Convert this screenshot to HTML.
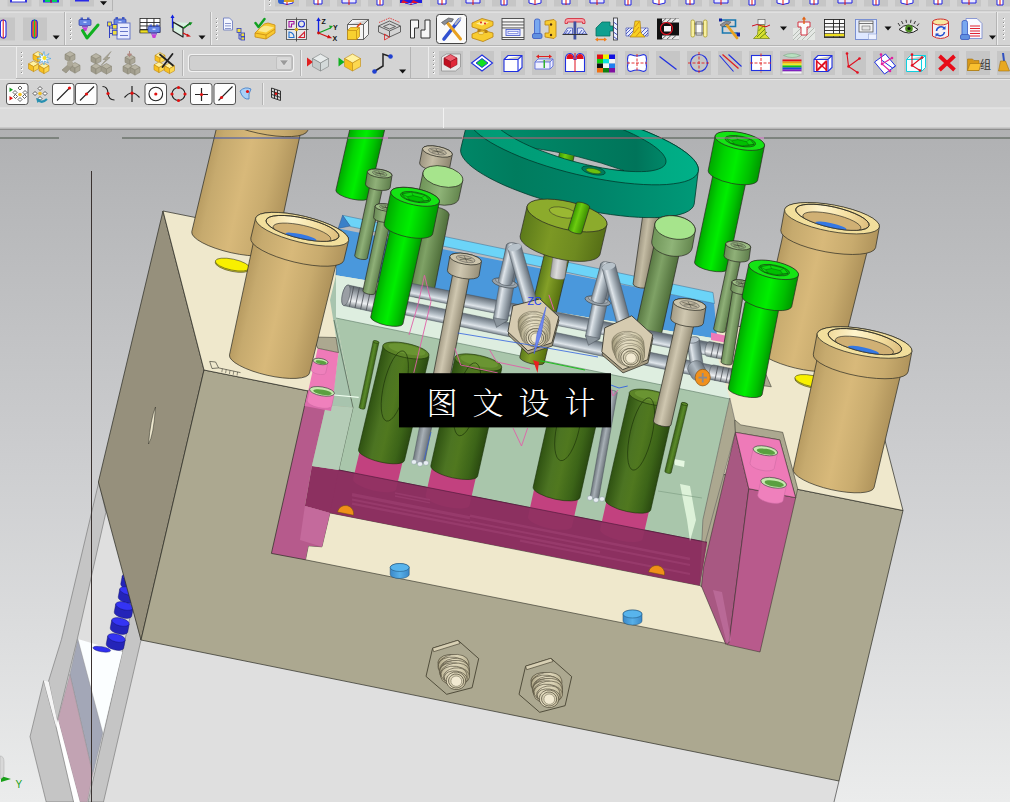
<!DOCTYPE html>
<html><head><meta charset="utf-8"><title>NX</title>
<style>html,body{margin:0;padding:0;background:#d4d4d4;overflow:hidden}svg{display:block}
text{font-family:"Liberation Sans","Noto Sans CJK SC",sans-serif}
.lbl{font-family:"Liberation Serif","Noto Serif CJK SC",serif}
</style></head><body>
<svg width="1010" height="802" viewBox="0 0 1010 802">
<defs>
<linearGradient id="g1" gradientUnits="userSpaceOnUse" x1="0.0" y1="130.0" x2="0.0" y2="802.0"><stop offset="0" stop-color="#b0b1b3"/><stop offset="0.5" stop-color="#cdced0"/><stop offset="1" stop-color="#ebecec"/></linearGradient>
<linearGradient id="g2" gradientUnits="userSpaceOnUse" x1="191.8" y1="231.6" x2="275.8" y2="250.4"><stop offset="0" stop-color="#b89c62"/><stop offset="0.12" stop-color="#c6aa6e"/><stop offset="0.45" stop-color="#d8b97a"/><stop offset="0.75" stop-color="#c8ab6e"/><stop offset="1" stop-color="#b0945c"/></linearGradient>
<linearGradient id="g3" gradientUnits="userSpaceOnUse" x1="213.9" y1="110.4" x2="307.7" y2="130.6"><stop offset="0" stop-color="#b89c62"/><stop offset="0.12" stop-color="#c6aa6e"/><stop offset="0.45" stop-color="#d8b97a"/><stop offset="0.75" stop-color="#c8ab6e"/><stop offset="1" stop-color="#b0945c"/></linearGradient>
<linearGradient id="g4" gradientUnits="userSpaceOnUse" x1="757.7" y1="347.2" x2="838.5" y2="366.4"><stop offset="0" stop-color="#b89c62"/><stop offset="0.12" stop-color="#c6aa6e"/><stop offset="0.45" stop-color="#d8b97a"/><stop offset="0.75" stop-color="#c8ab6e"/><stop offset="1" stop-color="#b0945c"/></linearGradient>
<linearGradient id="g5" gradientUnits="userSpaceOnUse" x1="780.8" y1="230.3" x2="875.6" y2="247.7"><stop offset="0" stop-color="#b89c62"/><stop offset="0.12" stop-color="#c6aa6e"/><stop offset="0.45" stop-color="#d8b97a"/><stop offset="0.75" stop-color="#c8ab6e"/><stop offset="1" stop-color="#b0945c"/></linearGradient>
<clipPath id="c6"><ellipse cx="832.4" cy="217.3" rx="37.6" ry="10.4" transform="rotate(12.7 832.4 217.3)"/></clipPath>
<linearGradient id="g7" gradientUnits="userSpaceOnUse" x1="793.4" y1="218.2" x2="870.6" y2="218.2"><stop offset="0" stop-color="#f0d898"/><stop offset="0.35" stop-color="#fff4cc"/><stop offset="0.7" stop-color="#f4dfa0"/><stop offset="1" stop-color="#dcbc7c"/></linearGradient>
<linearGradient id="g8" gradientUnits="userSpaceOnUse" x1="633.1" y1="283.9" x2="648.9" y2="286.1"><stop offset="0" stop-color="#9c9480"/><stop offset="0.4" stop-color="#c4bca4"/><stop offset="1" stop-color="#8e8670"/></linearGradient>
<linearGradient id="g9" gradientUnits="userSpaceOnUse" x1="455.0" y1="0.0" x2="700.0" y2="0.0"><stop offset="0" stop-color="#008868"/><stop offset="0.25" stop-color="#007c5e"/><stop offset="0.6" stop-color="#00856a"/><stop offset="1" stop-color="#009a78"/></linearGradient>
<linearGradient id="g10" gradientUnits="userSpaceOnUse" x1="455.0" y1="0.0" x2="700.0" y2="0.0"><stop offset="0" stop-color="#009a74"/><stop offset="0.5" stop-color="#00a07a"/><stop offset="1" stop-color="#00b088"/></linearGradient>
<linearGradient id="g11" gradientUnits="userSpaceOnUse" x1="500.0" y1="0.0" x2="670.0" y2="0.0"><stop offset="0" stop-color="#008c6a"/><stop offset="0.45" stop-color="#007e60"/><stop offset="0.8" stop-color="#00745a"/><stop offset="1" stop-color="#008a6a"/></linearGradient>
<clipPath id="cres"><path d="M529.7,147.5 Q579.2,154.5 624,170.6 Q580.8,170 529.7,147.5 Z"/></clipPath>
<linearGradient id="g12" gradientUnits="userSpaceOnUse" x1="555.7" y1="170.4" x2="570.3" y2="173.6"><stop offset="0" stop-color="#3a9800"/><stop offset="0.4" stop-color="#6ccc10"/><stop offset="1" stop-color="#3a8a00"/></linearGradient>
<linearGradient id="g13" gradientUnits="userSpaceOnUse" x1="519.8" y1="357.1" x2="544.2" y2="362.9"><stop offset="0" stop-color="#5c7a1a"/><stop offset="0.4" stop-color="#84a028"/><stop offset="1" stop-color="#56700f"/></linearGradient>
<linearGradient id="g14" gradientUnits="userSpaceOnUse" x1="550.2" y1="276.0" x2="564.8" y2="278.0"><stop offset="0" stop-color="#a8a8a8"/><stop offset="0.4" stop-color="#dcdcdc"/><stop offset="1" stop-color="#a0a0a0"/></linearGradient>
<linearGradient id="g15" gradientUnits="userSpaceOnUse" x1="520.1" y1="236.2" x2="599.9" y2="254.8"><stop offset="0" stop-color="#5c7a1a"/><stop offset="0.35" stop-color="#7c9824"/><stop offset="0.7" stop-color="#6e8a20"/><stop offset="1" stop-color="#566f16"/></linearGradient>
<linearGradient id="g16" gradientUnits="userSpaceOnUse" x1="568.3" y1="228.9" x2="581.7" y2="233.1"><stop offset="0" stop-color="#3a9800"/><stop offset="0.4" stop-color="#6ccc10"/><stop offset="1" stop-color="#3a8a00"/></linearGradient>
<linearGradient id="g17" gradientUnits="userSpaceOnUse" x1="418.6" y1="213.7" x2="431.4" y2="216.3"><stop offset="0" stop-color="#9c9480"/><stop offset="0.4" stop-color="#c4bca4"/><stop offset="1" stop-color="#8e8670"/></linearGradient>
<linearGradient id="g18" gradientUnits="userSpaceOnUse" x1="419.6" y1="163.0" x2="449.4" y2="169.0"><stop offset="0" stop-color="#9c9480"/><stop offset="0.4" stop-color="#c4bca4"/><stop offset="1" stop-color="#8e8670"/></linearGradient>
<linearGradient id="g19" gradientUnits="userSpaceOnUse" x1="406.8" y1="290.4" x2="433.2" y2="295.6"><stop offset="0" stop-color="#5a7a44"/><stop offset="0.4" stop-color="#7fa266"/><stop offset="1" stop-color="#4f6e3a"/></linearGradient>
<linearGradient id="g20" gradientUnits="userSpaceOnUse" x1="419.1" y1="190.7" x2="458.7" y2="199.3"><stop offset="0" stop-color="#6f9458"/><stop offset="0.5" stop-color="#8fb478"/><stop offset="1" stop-color="#64864e"/></linearGradient>
<linearGradient id="g21" gradientUnits="userSpaceOnUse" x1="335.9" y1="190.2" x2="369.1" y2="197.8"><stop offset="0" stop-color="#00a800"/><stop offset="0.25" stop-color="#00d400"/><stop offset="0.5" stop-color="#00ee00"/><stop offset="0.8" stop-color="#00c000"/><stop offset="1" stop-color="#009800"/></linearGradient>
<linearGradient id="g22" gradientUnits="userSpaceOnUse" x1="354.7" y1="255.6" x2="367.3" y2="258.4"><stop offset="0" stop-color="#6a8a56"/><stop offset="0.4" stop-color="#8fb078"/><stop offset="1" stop-color="#5f7e4c"/></linearGradient>
<linearGradient id="g23" gradientUnits="userSpaceOnUse" x1="365.5" y1="184.1" x2="390.1" y2="187.9"><stop offset="0" stop-color="#6a8a56"/><stop offset="0.4" stop-color="#8fb078"/><stop offset="1" stop-color="#5f7e4c"/></linearGradient>
<linearGradient id="g24" gradientUnits="userSpaceOnUse" x1="634.6" y1="333.1" x2="660.4" y2="338.9"><stop offset="0" stop-color="#5a7a44"/><stop offset="0.4" stop-color="#7fa266"/><stop offset="1" stop-color="#4f6e3a"/></linearGradient>
<linearGradient id="g25" gradientUnits="userSpaceOnUse" x1="651.8" y1="240.9" x2="692.2" y2="248.1"><stop offset="0" stop-color="#6f9458"/><stop offset="0.5" stop-color="#8fb478"/><stop offset="1" stop-color="#64864e"/></linearGradient>
<linearGradient id="g26" gradientUnits="userSpaceOnUse" x1="694.5" y1="262.5" x2="727.5" y2="269.5"><stop offset="0" stop-color="#00a800"/><stop offset="0.25" stop-color="#00d400"/><stop offset="0.5" stop-color="#00ee00"/><stop offset="0.8" stop-color="#00c000"/><stop offset="1" stop-color="#009800"/></linearGradient>
<linearGradient id="g27" gradientUnits="userSpaceOnUse" x1="708.2" y1="170.6" x2="757.6" y2="180.4"><stop offset="0" stop-color="#00a800"/><stop offset="0.25" stop-color="#00d400"/><stop offset="0.5" stop-color="#00ee00"/><stop offset="0.8" stop-color="#00c000"/><stop offset="1" stop-color="#009800"/></linearGradient>
<linearGradient id="g28" gradientUnits="userSpaceOnUse" x1="713.6" y1="328.8" x2="725.4" y2="331.2"><stop offset="0" stop-color="#6a8a56"/><stop offset="0.4" stop-color="#8fb078"/><stop offset="1" stop-color="#5f7e4c"/></linearGradient>
<linearGradient id="g29" gradientUnits="userSpaceOnUse" x1="724.0" y1="255.7" x2="749.0" y2="259.3"><stop offset="0" stop-color="#6a8a56"/><stop offset="0.4" stop-color="#8fb078"/><stop offset="1" stop-color="#5f7e4c"/></linearGradient>
<linearGradient id="g30" gradientUnits="userSpaceOnUse" x1="393.7" y1="293.1" x2="396.3" y2="280.3"><stop offset="0" stop-color="#7a858e"/><stop offset="0.28" stop-color="#dfe5ea"/><stop offset="0.5" stop-color="#b4bec6"/><stop offset="1" stop-color="#66707a"/></linearGradient>
<linearGradient id="g31" gradientUnits="userSpaceOnUse" x1="372.6" y1="308.1" x2="375.4" y2="294.7"><stop offset="0" stop-color="#7a858e"/><stop offset="0.28" stop-color="#dfe5ea"/><stop offset="0.5" stop-color="#b4bec6"/><stop offset="1" stop-color="#66707a"/></linearGradient>
<linearGradient id="g32" gradientUnits="userSpaceOnUse" x1="371.8" y1="311.7" x2="376.2" y2="291.1"><stop offset="0" stop-color="#70787e"/><stop offset="0.3" stop-color="#f0f2f4"/><stop offset="0.6" stop-color="#b0b6bc"/><stop offset="1" stop-color="#60686e"/></linearGradient>
<linearGradient id="g33" gradientUnits="userSpaceOnUse" x1="706.5" y1="356.1" x2="709.5" y2="341.5"><stop offset="0" stop-color="#70787e"/><stop offset="0.3" stop-color="#f0f2f4"/><stop offset="0.6" stop-color="#b0b6bc"/><stop offset="1" stop-color="#60686e"/></linearGradient>
<linearGradient id="g34" gradientUnits="userSpaceOnUse" x1="710.5" y1="379.5" x2="713.5" y2="364.9"><stop offset="0" stop-color="#70787e"/><stop offset="0.3" stop-color="#f0f2f4"/><stop offset="0.6" stop-color="#b0b6bc"/><stop offset="1" stop-color="#60686e"/></linearGradient>
<linearGradient id="g35" gradientUnits="userSpaceOnUse" x1="362.9" y1="290.7" x2="375.1" y2="293.3"><stop offset="0" stop-color="#6a8a56"/><stop offset="0.4" stop-color="#8fb078"/><stop offset="1" stop-color="#5f7e4c"/></linearGradient>
<linearGradient id="g36" gradientUnits="userSpaceOnUse" x1="373.6" y1="217.6" x2="395.4" y2="220.4"><stop offset="0" stop-color="#6a8a56"/><stop offset="0.4" stop-color="#8fb078"/><stop offset="1" stop-color="#5f7e4c"/></linearGradient>
<linearGradient id="g37" gradientUnits="userSpaceOnUse" x1="721.0" y1="362.1" x2="732.0" y2="363.9"><stop offset="0" stop-color="#6a8a56"/><stop offset="0.4" stop-color="#8fb078"/><stop offset="1" stop-color="#5f7e4c"/></linearGradient>
<linearGradient id="g38" gradientUnits="userSpaceOnUse" x1="730.7" y1="289.4" x2="750.5" y2="292.6"><stop offset="0" stop-color="#6a8a56"/><stop offset="0.4" stop-color="#8fb078"/><stop offset="1" stop-color="#5f7e4c"/></linearGradient>
<linearGradient id="g39" gradientUnits="userSpaceOnUse" x1="370.7" y1="317.1" x2="402.9" y2="324.1"><stop offset="0" stop-color="#00a800"/><stop offset="0.25" stop-color="#00d400"/><stop offset="0.5" stop-color="#00ee00"/><stop offset="0.8" stop-color="#00c000"/><stop offset="1" stop-color="#009800"/></linearGradient>
<linearGradient id="g40" gradientUnits="userSpaceOnUse" x1="384.1" y1="223.7" x2="432.7" y2="233.9"><stop offset="0" stop-color="#00a800"/><stop offset="0.25" stop-color="#00d400"/><stop offset="0.5" stop-color="#00ee00"/><stop offset="0.8" stop-color="#00c000"/><stop offset="1" stop-color="#009800"/></linearGradient>
<linearGradient id="g41" gradientUnits="userSpaceOnUse" x1="728.3" y1="388.2" x2="762.1" y2="394.8"><stop offset="0" stop-color="#00a800"/><stop offset="0.25" stop-color="#00d400"/><stop offset="0.5" stop-color="#00ee00"/><stop offset="0.8" stop-color="#00c000"/><stop offset="1" stop-color="#009800"/></linearGradient>
<linearGradient id="g42" gradientUnits="userSpaceOnUse" x1="742.1" y1="296.1" x2="791.7" y2="306.7"><stop offset="0" stop-color="#00a800"/><stop offset="0.25" stop-color="#00d400"/><stop offset="0.5" stop-color="#00ee00"/><stop offset="0.8" stop-color="#00c000"/><stop offset="1" stop-color="#009800"/></linearGradient>
<linearGradient id="g43" gradientUnits="userSpaceOnUse" x1="493.4" y1="317.7" x2="507.8" y2="320.2"><stop offset="0" stop-color="#7a858e"/><stop offset="0.28" stop-color="#dfe5ea"/><stop offset="0.5" stop-color="#b4bec6"/><stop offset="1" stop-color="#66707a"/></linearGradient>
<linearGradient id="g44" gradientUnits="userSpaceOnUse" x1="498.4" y1="280.4" x2="512.0" y2="283.6"><stop offset="0" stop-color="#7a858e"/><stop offset="0.28" stop-color="#dfe5ea"/><stop offset="0.5" stop-color="#b4bec6"/><stop offset="1" stop-color="#66707a"/></linearGradient>
<linearGradient id="g45" gradientUnits="userSpaceOnUse" x1="526.5" y1="313.9" x2="539.5" y2="310.1"><stop offset="0" stop-color="#7a858e"/><stop offset="0.28" stop-color="#dfe5ea"/><stop offset="0.5" stop-color="#b4bec6"/><stop offset="1" stop-color="#66707a"/></linearGradient>
<linearGradient id="g46" gradientUnits="userSpaceOnUse" x1="585.5" y1="335.5" x2="599.8" y2="338.5"><stop offset="0" stop-color="#7a858e"/><stop offset="0.28" stop-color="#dfe5ea"/><stop offset="0.5" stop-color="#b4bec6"/><stop offset="1" stop-color="#66707a"/></linearGradient>
<linearGradient id="g47" gradientUnits="userSpaceOnUse" x1="591.3" y1="298.0" x2="604.7" y2="301.8"><stop offset="0" stop-color="#7a858e"/><stop offset="0.28" stop-color="#dfe5ea"/><stop offset="0.5" stop-color="#b4bec6"/><stop offset="1" stop-color="#66707a"/></linearGradient>
<linearGradient id="g48" gradientUnits="userSpaceOnUse" x1="620.4" y1="336.8" x2="633.6" y2="333.2"><stop offset="0" stop-color="#7a858e"/><stop offset="0.28" stop-color="#dfe5ea"/><stop offset="0.5" stop-color="#b4bec6"/><stop offset="1" stop-color="#66707a"/></linearGradient>
<linearGradient id="g49" gradientUnits="userSpaceOnUse" x1="690.8" y1="367.0" x2="703.2" y2="365.0"><stop offset="0" stop-color="#7a858e"/><stop offset="0.28" stop-color="#dfe5ea"/><stop offset="0.5" stop-color="#b4bec6"/><stop offset="1" stop-color="#66707a"/></linearGradient>
<linearGradient id="g50" gradientUnits="userSpaceOnUse" x1="692.1" y1="378.0" x2="705.9" y2="370.0"><stop offset="0" stop-color="#7a848c"/><stop offset="0.5" stop-color="#b0bac2"/><stop offset="1" stop-color="#6a747c"/></linearGradient>
<linearGradient id="g51" gradientUnits="userSpaceOnUse" x1="517.9" y1="323.8" x2="551.9" y2="323.8"><stop offset="0" stop-color="#a09878"/><stop offset="0.35" stop-color="#e8e0c6"/><stop offset="0.7" stop-color="#d8d0b2"/><stop offset="1" stop-color="#a8a080"/></linearGradient>
<linearGradient id="g52" gradientUnits="userSpaceOnUse" x1="611.7" y1="343.8" x2="645.7" y2="343.8"><stop offset="0" stop-color="#a09878"/><stop offset="0.35" stop-color="#e8e0c6"/><stop offset="0.7" stop-color="#d8d0b2"/><stop offset="1" stop-color="#a8a080"/></linearGradient>
<linearGradient id="g53" gradientUnits="userSpaceOnUse" x1="358.5" y1="449.6" x2="404.5" y2="460.4"><stop offset="0" stop-color="#2f5212"/><stop offset="0.3" stop-color="#4c7422"/><stop offset="0.5" stop-color="#50781f"/><stop offset="0.8" stop-color="#3c6418"/><stop offset="1" stop-color="#2a4a10"/></linearGradient>
<linearGradient id="g54" gradientUnits="userSpaceOnUse" x1="430.8" y1="465.7" x2="477.6" y2="476.3"><stop offset="0" stop-color="#2f5212"/><stop offset="0.3" stop-color="#4c7422"/><stop offset="0.5" stop-color="#50781f"/><stop offset="0.8" stop-color="#3c6418"/><stop offset="1" stop-color="#2a4a10"/></linearGradient>
<linearGradient id="g55" gradientUnits="userSpaceOnUse" x1="533.1" y1="487.3" x2="579.9" y2="497.7"><stop offset="0" stop-color="#2f5212"/><stop offset="0.3" stop-color="#4c7422"/><stop offset="0.5" stop-color="#50781f"/><stop offset="0.8" stop-color="#3c6418"/><stop offset="1" stop-color="#2a4a10"/></linearGradient>
<linearGradient id="g56" gradientUnits="userSpaceOnUse" x1="605.3" y1="499.9" x2="650.7" y2="510.1"><stop offset="0" stop-color="#2f5212"/><stop offset="0.3" stop-color="#4c7422"/><stop offset="0.5" stop-color="#50781f"/><stop offset="0.8" stop-color="#3c6418"/><stop offset="1" stop-color="#2a4a10"/></linearGradient>
<linearGradient id="g57" gradientUnits="userSpaceOnUse" x1="359.1" y1="407.4" x2="364.9" y2="408.6"><stop offset="0" stop-color="#3c6418"/><stop offset="0.5" stop-color="#5a8a2a"/><stop offset="1" stop-color="#3c6418"/></linearGradient>
<linearGradient id="g58" gradientUnits="userSpaceOnUse" x1="664.8" y1="471.2" x2="671.2" y2="472.8"><stop offset="0" stop-color="#3c6418"/><stop offset="0.5" stop-color="#5a8a2a"/><stop offset="1" stop-color="#3c6418"/></linearGradient>
<linearGradient id="g59" gradientUnits="userSpaceOnUse" x1="429.7" y1="393.4" x2="446.3" y2="396.6"><stop offset="0" stop-color="#a49c86"/><stop offset="0.4" stop-color="#cfc7b0"/><stop offset="1" stop-color="#968e78"/></linearGradient>
<linearGradient id="g60" gradientUnits="userSpaceOnUse" x1="447.4" y1="270.4" x2="479.0" y2="275.8"><stop offset="0" stop-color="#a49c86"/><stop offset="0.4" stop-color="#cfc7b0"/><stop offset="1" stop-color="#968e78"/></linearGradient>
<linearGradient id="g61" gradientUnits="userSpaceOnUse" x1="653.4" y1="421.0" x2="671.0" y2="425.0"><stop offset="0" stop-color="#a49c86"/><stop offset="0.4" stop-color="#cfc7b0"/><stop offset="1" stop-color="#968e78"/></linearGradient>
<linearGradient id="g62" gradientUnits="userSpaceOnUse" x1="670.7" y1="318.4" x2="703.3" y2="323.6"><stop offset="0" stop-color="#a49c86"/><stop offset="0.4" stop-color="#cfc7b0"/><stop offset="1" stop-color="#968e78"/></linearGradient>
<linearGradient id="g63" gradientUnits="userSpaceOnUse" x1="413.1" y1="459.9" x2="424.9" y2="462.1"><stop offset="0" stop-color="#70787e"/><stop offset="0.4" stop-color="#a8b0b6"/><stop offset="1" stop-color="#687076"/></linearGradient>
<linearGradient id="g64" gradientUnits="userSpaceOnUse" x1="590.2" y1="496.2" x2="598.8" y2="497.8"><stop offset="0" stop-color="#70787e"/><stop offset="0.4" stop-color="#a8b0b6"/><stop offset="1" stop-color="#687076"/></linearGradient>
<linearGradient id="g65" gradientUnits="userSpaceOnUse" x1="229.5" y1="354.9" x2="309.5" y2="373.1"><stop offset="0" stop-color="#b89c62"/><stop offset="0.12" stop-color="#c6aa6e"/><stop offset="0.45" stop-color="#d8b97a"/><stop offset="0.75" stop-color="#c8ab6e"/><stop offset="1" stop-color="#b0945c"/></linearGradient>
<linearGradient id="g66" gradientUnits="userSpaceOnUse" x1="250.8" y1="238.1" x2="343.8" y2="260.5"><stop offset="0" stop-color="#b89c62"/><stop offset="0.12" stop-color="#c6aa6e"/><stop offset="0.45" stop-color="#d8b97a"/><stop offset="0.75" stop-color="#c8ab6e"/><stop offset="1" stop-color="#b0945c"/></linearGradient>
<clipPath id="c67"><ellipse cx="302.5" cy="228.4" rx="37.3" ry="10.3" transform="rotate(12.7 302.5 228.4)"/></clipPath>
<linearGradient id="g68" gradientUnits="userSpaceOnUse" x1="263.9" y1="229.3" x2="340.3" y2="229.3"><stop offset="0" stop-color="#f0d898"/><stop offset="0.35" stop-color="#fff4cc"/><stop offset="0.7" stop-color="#f4dfa0"/><stop offset="1" stop-color="#dcbc7c"/></linearGradient>
<linearGradient id="g69" gradientUnits="userSpaceOnUse" x1="793.3" y1="469.2" x2="874.1" y2="487.4"><stop offset="0" stop-color="#b89c62"/><stop offset="0.12" stop-color="#c6aa6e"/><stop offset="0.45" stop-color="#d8b97a"/><stop offset="0.75" stop-color="#c8ab6e"/><stop offset="1" stop-color="#b0945c"/></linearGradient>
<linearGradient id="g70" gradientUnits="userSpaceOnUse" x1="813.3" y1="354.2" x2="908.1" y2="371.8"><stop offset="0" stop-color="#b89c62"/><stop offset="0.12" stop-color="#c6aa6e"/><stop offset="0.45" stop-color="#d8b97a"/><stop offset="0.75" stop-color="#c8ab6e"/><stop offset="1" stop-color="#b0945c"/></linearGradient>
<clipPath id="c71"><ellipse cx="864.9" cy="341.6" rx="37.6" ry="10.4" transform="rotate(12.7 864.9 341.6)"/></clipPath>
<linearGradient id="g72" gradientUnits="userSpaceOnUse" x1="825.9" y1="342.5" x2="903.1" y2="342.5"><stop offset="0" stop-color="#f0d898"/><stop offset="0.35" stop-color="#fff4cc"/><stop offset="0.7" stop-color="#f4dfa0"/><stop offset="1" stop-color="#dcbc7c"/></linearGradient>
<linearGradient id="g73" gradientUnits="userSpaceOnUse" x1="390.2" y1="574.5" x2="409.2" y2="574.5"><stop offset="0" stop-color="#3a88c8"/><stop offset="0.5" stop-color="#58b0e8"/><stop offset="1" stop-color="#3a88c8"/></linearGradient>
<linearGradient id="g74" gradientUnits="userSpaceOnUse" x1="623.0" y1="621.0" x2="642.0" y2="621.0"><stop offset="0" stop-color="#3a88c8"/><stop offset="0.5" stop-color="#58b0e8"/><stop offset="1" stop-color="#3a88c8"/></linearGradient>
<linearGradient id="g75" gradientUnits="userSpaceOnUse" x1="437.0" y1="668.0" x2="471.0" y2="668.0"><stop offset="0" stop-color="#a8a080"/><stop offset="0.35" stop-color="#e4dcc0"/><stop offset="0.7" stop-color="#d8d0b2"/><stop offset="1" stop-color="#b0a888"/></linearGradient>
<linearGradient id="g76" gradientUnits="userSpaceOnUse" x1="530.0" y1="686.0" x2="564.0" y2="686.0"><stop offset="0" stop-color="#a8a080"/><stop offset="0.35" stop-color="#e4dcc0"/><stop offset="0.7" stop-color="#d8d0b2"/><stop offset="1" stop-color="#b0a888"/></linearGradient>
<clipPath id="vp"><rect x="0" y="130" width="1010" height="672"/></clipPath>
</defs>
<rect width="1010" height="802" fill="#d4d4d4"/>
<g clip-path="url(#vp)">
<rect x="0" y="130" width="1010" height="672" fill="url(#g1)"/>
<polygon points="141.0,640.0 839.0,781.0 834.0,802.0 90.0,802.0" fill="#dfdfdf" />
<polygon points="105.9,512.4 141.0,640.0 122.3,651.9 77.3,638.9" fill="#dfdfdf" />
<polyline points="839.0,781.0 834.0,802.0" fill="none" stroke="#444" stroke-width="0.7"/>
<polygon points="98.9,481.7 105.9,512.4 77.3,638.9 57.0,722.0 48.6,681.0 61.4,639.7" fill="#c5c5c5" stroke="#707070" stroke-width="0.6" />
<polygon points="132.5,606.0 141.0,640.0 103.5,802.0 88.0,802.0 122.3,651.9" fill="#c5c5c5" stroke="#707070" stroke-width="0.6" />
<polygon points="77.8,638.9 122.3,651.9 102.5,734.0" fill="#fbfeff" />
<polygon points="77.8,638.9 102.8,733.0 92.8,774.2 69.9,674.4" fill="#a3a7b7" stroke="#888" stroke-width="0.4" />
<polygon points="69.9,674.4 92.8,774.2 87.3,802.0 79.8,802.0 57.9,719.3" fill="#c2a3b3" stroke="#888" stroke-width="0.4" />
<polygon points="56.1,726.8 57.9,719.3 79.8,802.0 73.6,802.0" fill="#ffffff" />
<polygon points="43.7,680.6 56.1,726.8 73.6,802.0 46.2,802.0 30.0,736.7" fill="#c5c5c5" stroke="#707070" stroke-width="0.6" />
<polygon points="43.7,680.6 48.7,681.8 57.5,722.0 56.1,726.8" fill="#f4f4f4" />
<polyline points="91.5,171.0 91.5,802.0" fill="none" stroke="#3a3230" stroke-width="1.0"/>
<path d="M122.2,576.0 l-1.5,8 a9,3.8 14 0 0 17.5,4.2 l1.5,-8 Z" fill="#2424b8" stroke="#101060" stroke-width="0.4" />
<ellipse cx="131.0" cy="578.0" rx="9.0" ry="3.9" transform="rotate(14.0 131.0 578.0)" fill="#3434f4" stroke="#101060" stroke-width="0.4"/>
<path d="M119.7,589.0 l-1.5,8 a9,3.8 14 0 0 17.5,4.2 l1.5,-8 Z" fill="#2424b8" stroke="#101060" stroke-width="0.4" />
<ellipse cx="128.5" cy="591.0" rx="9.0" ry="3.9" transform="rotate(14.0 128.5 591.0)" fill="#3434f4" stroke="#101060" stroke-width="0.4"/>
<path d="M115.7,604.0 l-1.5,8 a9,3.8 14 0 0 17.5,4.2 l1.5,-8 Z" fill="#2424b8" stroke="#101060" stroke-width="0.4" />
<ellipse cx="124.5" cy="606.0" rx="9.0" ry="3.9" transform="rotate(14.0 124.5 606.0)" fill="#3434f4" stroke="#101060" stroke-width="0.4"/>
<path d="M111.7,620.0 l-1.5,8 a9,3.8 14 0 0 17.5,4.2 l1.5,-8 Z" fill="#2424b8" stroke="#101060" stroke-width="0.4" />
<ellipse cx="120.5" cy="622.0" rx="9.0" ry="3.9" transform="rotate(14.0 120.5 622.0)" fill="#3434f4" stroke="#101060" stroke-width="0.4"/>
<path d="M107.7,636.0 l-1.5,8 a9,3.8 14 0 0 17.5,4.2 l1.5,-8 Z" fill="#2424b8" stroke="#101060" stroke-width="0.4" />
<ellipse cx="116.5" cy="638.0" rx="9.0" ry="3.9" transform="rotate(14.0 116.5 638.0)" fill="#3434f4" stroke="#101060" stroke-width="0.4"/>
<ellipse cx="101.8" cy="649.2" rx="9.0" ry="2.6" transform="rotate(10.0 101.8 649.2)" fill="#3030f0" stroke="#101060" stroke-width="0.4"/>
<polygon points="163.0,211.0 204.0,370.0 141.0,640.0 98.4,482.0" fill="#96907c" stroke="#2a2a22" stroke-width="0.7" />
<polygon points="204.0,370.0 903.0,510.5 839.0,781.0 141.0,640.0" fill="#aca890" stroke="#2a2a22" stroke-width="0.7" />
<polygon points="163.0,211.0 204.0,370.0 903.0,510.5 862.0,351.0" fill="#efe8cc" stroke="#2a2a22" stroke-width="0.7" />
<polygon points="756.0,369.0 764.2,370.3 771.3,386.8 758.0,385.0" fill="#aca890" stroke="#2a2a22" stroke-width="0.5" />
<polygon points="756.0,378.0 762.0,379.0 763.0,385.5 757.0,385.0" fill="#ee7ab8" />
<polygon points="209.7,361.4 215.6,362.0 218.6,367.9 212.0,368.5" fill="#efe8cc" stroke="#2a2a22" stroke-width="0.6" />
<polyline points="218.6,367.9 240.5,372.6" fill="none" stroke="#2a2a22" stroke-width="0.6"/>
<polyline points="222.4,368.7 221.8,372.3" fill="none" stroke="#2a2a22" stroke-width="0.5"/>
<polyline points="226.2,369.5 225.6,373.1" fill="none" stroke="#2a2a22" stroke-width="0.5"/>
<polyline points="230.0,370.4 229.4,374.0" fill="none" stroke="#2a2a22" stroke-width="0.5"/>
<polyline points="233.8,371.2 233.2,374.8" fill="none" stroke="#2a2a22" stroke-width="0.5"/>
<polyline points="237.6,372.0 237.0,375.6" fill="none" stroke="#2a2a22" stroke-width="0.5"/>
<path d="M155.5,407 q-5,12 -7,37 q5,-8 7,-37 Z" fill="#f0ead0" stroke="#2a2a22" stroke-width="0.5" />
<polygon points="338.2,228.4 336.0,275.3 712.0,338.0 717.0,336.0 714.0,303.0" fill="#4a98dc" />
<polygon points="342.6,215.3 713.0,292.5 714.5,303.5 350.2,226.5" fill="#6cd4f8" stroke="#3a6a90" stroke-width="0.5" />
<polygon points="342.6,215.3 338.2,228.4 350.2,226.0" fill="#3a80c8" stroke="#2a5a90" stroke-width="0.5" />
<polyline points="338.2,228.4 336.0,275.3" fill="none" stroke="#2a5a90" stroke-width="0.6"/>
<polygon points="336.0,275.3 712.0,338.0 730.0,399.0 336.0,318.0" fill="#deeee0" />
<polygon points="336.0,318.0 730.0,399.0 703.0,520.0 699.6,585.0 311.9,466.0 353.0,407.5" fill="#a9c6ab" />
<polygon points="330.0,300.0 336.0,275.3 336.0,318.0 353.0,407.5 331.5,405.6 338.5,352.6 336.0,337.0" fill="#a8c4ae" />
<polyline points="336.0,318.0 730.0,399.0" fill="none" stroke="#5a7a6a" stroke-width="0.6"/>
<polyline points="334.0,320.0 353.0,407.5 338.8,470.0" fill="none" stroke="#3a4a3a" stroke-width="0.6"/>
<polygon points="311.9,466.0 338.8,470.0 707.0,542.3 699.6,585.5 329.9,512.9 304.9,505.9" fill="#8c3060" />
<polyline points="338.8,470.0 707.0,542.3" fill="none" stroke="#4a1838" stroke-width="0.6"/>
<polygon points="329.9,512.9 699.6,585.5 707.0,589.7 725.8,643.4 305.5,559.8 308.3,545.8 321.9,546.8" fill="#efe8cc" stroke="#2a2a22" stroke-width="0.6" />
<polygon points="308.0,390.5 271.4,553.4 305.5,559.8 308.3,545.8 321.9,546.8 329.9,512.9 304.9,505.9 311.9,466.0 325.0,409.8 331.5,405.6" fill="#b65a8c" />
<polygon points="304.9,505.9 329.9,512.9 321.9,546.8 300.0,540.0" fill="#c46a9c" />
<polyline points="308.0,390.5 271.4,553.4 305.5,559.8" fill="none" stroke="#2a2a22" stroke-width="0.7"/>
<polygon points="331.5,405.6 353.0,407.5 338.8,470.0 311.9,466.0 325.0,409.8" fill="#b4ccb6" />
<polygon points="317.7,348.2 338.5,352.6 333.5,394.5 308.3,390.5" fill="#ee7ab8" />
<polygon points="308.3,390.5 333.5,394.5 331.0,411.0 304.5,406.0" fill="#dc6cac" />
<polygon points="313.0,337.0 336.0,337.5 338.5,352.6 317.7,348.2" fill="#aca890" stroke="#2a2a22" stroke-width="0.5" />
<polygon points="729.8,398.0 734.8,419.9 735.4,432.3 705.9,540.0 699.6,585.5 702.9,519.7" fill="#aca890" stroke="#555" stroke-width="0.5" />
<polygon points="735.4,432.3 748.8,488.7 729.0,642.4 725.8,644.4 701.5,586.4 703.5,567.3" fill="#a85882" stroke="#2a2a22" stroke-width="0.5" />
<polygon points="748.8,488.7 795.7,497.7 760.0,652.0 727.0,644.6 729.0,642.4" fill="#b85a8c" stroke="#2a2a22" stroke-width="0.5" />
<polygon points="713.0,590.0 722.0,592.0 731.0,640.0 727.0,644.0" fill="#c070a0" opacity="0.7" />
<polygon points="740.8,424.9 782.7,432.3 797.7,488.7 795.7,497.7 779.7,439.9 735.4,432.3 734.8,419.9" fill="#aca890" stroke="#2a2a22" stroke-width="0.5" />
<polygon points="735.4,432.3 779.7,439.9 795.7,497.7 748.8,488.7" fill="#ee7ab8" stroke="#2a2a22" stroke-width="0.5" />
<path d="M750.0,463.1 L753.3,448.1 A12.4,4.6 12.4 0 1 777.5,453.5 L774.2,468.5 A12.4,4.6 12.4 0 1 750.0,463.1 Z" fill="#ef80bc" stroke="#c868a0" stroke-width="0.5" />
<ellipse cx="765.4" cy="450.8" rx="12.4" ry="4.6" transform="rotate(10.0 765.4 450.8)" fill="#c8e8b0" stroke="#3a3a3a" stroke-width="0.6"/>
<ellipse cx="765.9" cy="451.6" rx="9.3" ry="2.8" transform="rotate(10.0 765.9 451.6)" fill="#5aa040"/>
<path d="M757.7,495.0 L761.0,480.0 A13.0,5.0 12.4 0 1 786.4,485.6 L783.1,500.6 A13.0,5.0 12.4 0 1 757.7,495.0 Z" fill="#ef80bc" stroke="#c868a0" stroke-width="0.5" />
<ellipse cx="773.7" cy="482.8" rx="13.0" ry="5.0" transform="rotate(10.0 773.7 482.8)" fill="#c8e8b0" stroke="#3a3a3a" stroke-width="0.6"/>
<ellipse cx="774.2" cy="483.6" rx="9.8" ry="3.0" transform="rotate(10.0 774.2 483.6)" fill="#5aa040"/>
<path d="M311.1,369.9 L313.3,359.9 A7.5,3.0 12.4 0 1 327.9,363.1 L325.7,373.1 A7.5,3.0 12.4 0 1 311.1,369.9 Z" fill="#ef80bc" stroke="#c868a0" stroke-width="0.5" />
<ellipse cx="320.6" cy="361.5" rx="7.5" ry="3.0" transform="rotate(10.0 320.6 361.5)" fill="#c8e8b0" stroke="#3a3a3a" stroke-width="0.6"/>
<ellipse cx="321.1" cy="362.3" rx="5.6" ry="1.8" transform="rotate(10.0 321.1 362.3)" fill="#5aa040"/>
<path d="M307.1,400.7 L309.7,388.7 A12.6,4.4 12.4 0 1 334.3,394.1 L331.7,406.1 A12.6,4.4 12.4 0 1 307.1,400.7 Z" fill="#ef80bc" stroke="#c868a0" stroke-width="0.5" />
<ellipse cx="322.0" cy="391.4" rx="12.6" ry="4.4" transform="rotate(10.0 322.0 391.4)" fill="#c8e8b0" stroke="#3a3a3a" stroke-width="0.6"/>
<ellipse cx="322.5" cy="392.2" rx="9.4" ry="2.6" transform="rotate(10.0 322.5 392.2)" fill="#5aa040"/>
<ellipse cx="232.4" cy="265.9" rx="17.5" ry="5.5" transform="rotate(12.0 232.4 265.9)" fill="#d8d020" stroke="#2a2a22" stroke-width="0.5"/>
<ellipse cx="232.4" cy="264.6" rx="17.5" ry="5.5" transform="rotate(12.0 232.4 264.6)" fill="#f8f000" stroke="#2a2a22" stroke-width="0.5"/>
<ellipse cx="812.0" cy="382.3" rx="17.5" ry="5.5" transform="rotate(12.0 812.0 382.3)" fill="#d8d020" stroke="#2a2a22" stroke-width="0.5"/>
<ellipse cx="812.0" cy="381.0" rx="17.5" ry="5.5" transform="rotate(12.0 812.0 381.0)" fill="#f8f000" stroke="#2a2a22" stroke-width="0.5"/>
<path d="M191.8,231.6 L221.8,105.8 A41.3,11.6 12.6 0 1 302.4,123.8 L275.8,250.4 A43.0,12.0 12.6 0 1 191.8,231.6 Z" fill="url(#g2)" stroke="#2a2a22" stroke-width="0.7" />
<path d="M213.9,110.4 L217.9,91.9 A48.0,13.4 12.2 0 1 311.7,112.1 L307.7,130.6 A48.0,13.4 12.2 0 1 213.9,110.4 Z" fill="url(#g3)" stroke="#2a2a22" stroke-width="0.7" />
<path d="M757.7,347.2 L783.3,233.6 A42.9,12.0 13.4 0 1 866.7,253.4 L838.5,366.4 A41.5,11.6 13.4 0 1 757.7,347.2 Z" fill="url(#g4)" stroke="#2a2a22" stroke-width="0.7" />
<path d="M780.8,230.3 L784.6,209.5 A48.2,13.3 10.4 0 1 879.4,226.9 L875.6,247.7 A48.2,13.3 10.4 0 1 780.8,230.3 Z" fill="url(#g5)" stroke="#2a2a22" stroke-width="0.7" />
<ellipse cx="832.0" cy="218.2" rx="48.2" ry="13.3" transform="rotate(10.4 832.0 218.2)" fill="#f2df9c" stroke="#2a2a22" stroke-width="0.7"/>
<ellipse cx="832.4" cy="217.3" rx="37.6" ry="10.4" transform="rotate(12.7 832.4 217.3)" fill="url(#g7)" stroke="#2a2a22" stroke-width="0.7"/>
<g clip-path="url(#c6)">
<ellipse cx="831.9" cy="221.8" rx="29.7" ry="7.7" transform="rotate(12.7 831.9 221.8)" fill="#d0b074" stroke="#2a2a22" stroke-width="0.6"/>
<ellipse cx="831.0" cy="225.8" rx="15.9" ry="2.7" transform="rotate(12.7 831.0 225.8)" fill="#3478e4"/>
</g>
<ellipse cx="832.4" cy="217.3" rx="37.6" ry="10.4" transform="rotate(12.7 832.4 217.3)" fill="none" stroke="#2a2a22" stroke-width="0.7"/>
<path d="M633.1,283.9 L645.1,198.9 A8.0,3.2 8.0 0 1 660.9,201.1 L648.9,286.1 A8.0,3.2 8.0 0 1 633.1,283.9 Z" fill="url(#g8)" stroke="#2a2a22" stroke-width="0.7" />
<polygon points="460.6,151.3 460.8,148.5 468.6,116.9 469.7,114.3 471.6,112.0 474.4,110.0 478.0,108.2 482.4,106.7 487.6,105.5 493.5,104.6 500.1,103.9 507.3,103.6 515.1,103.6 523.4,103.9 532.2,104.5 541.4,105.4 550.9,106.6 560.6,108.1 570.5,109.8 580.5,111.9 590.6,114.1 600.5,116.6 610.4,119.3 620.0,122.2 629.4,125.3 638.4,128.5 647.0,131.8 655.1,135.3 662.7,138.8 669.6,142.3 675.9,145.8 681.5,149.4 686.4,152.9 690.5,156.3 693.7,159.6 696.1,162.8 697.7,165.9 698.4,168.8 698.2,171.5 694.2,204.1 693.2,206.7 691.2,209.0 688.4,211.1 684.7,212.9 680.2,214.4 675.0,215.7 668.9,216.6 662.2,217.2 654.9,217.6 647.0,217.6 638.5,217.3 629.6,216.7 620.2,215.7 610.6,214.5 600.7,213.0 590.6,211.2 580.4,209.2 570.2,206.8 560.1,204.3 550.1,201.6 540.3,198.6 530.7,195.5 521.6,192.2 512.8,188.8 504.6,185.4 496.9,181.8 489.8,178.2 483.4,174.6 477.7,171.0 472.8,167.5 468.6,164.0 465.3,160.6 462.9,157.3 461.3,154.2" fill="url(#g9)" stroke="#003a2c" stroke-width="0.8" />
<path d="M665.8,163.0 L664.9,164.8 L663.4,166.5 L661.2,167.9 L658.4,169.1 L655.0,170.1 L651.0,170.9 L646.5,171.4 L641.4,171.6 L635.9,171.6 L629.9,171.4 L623.6,170.9 L616.9,170.2 L609.9,169.2 L602.6,168.0 L595.2,166.6 L587.7,164.9 L580.1,163.1 L572.4,161.1 L564.8,158.9 L557.4,156.5 L550.1,154.0 L543.0,151.4 L536.1,148.8 L529.6,146.0 L523.5,143.2 L517.8,140.3 L512.6,137.4 L507.8,134.6 L503.6,131.8 L500.0,129.0 L497.0,126.3 L494.5,123.7 L492.8,121.2 L491.6,118.8 L491.2,116.6 L491.4,114.6 L492.3,112.8 L493.8,111.1 L496.0,109.7 L498.8,108.5 L502.2,107.5 L506.2,106.7 L510.7,106.2 L515.8,106.0 L521.3,106.0 L527.3,106.2 L533.6,106.7 L540.3,107.4 L547.3,108.4 L554.6,109.6 L562.0,111.0 L569.5,112.7 L577.1,114.5 L584.8,116.5 L592.4,118.7 L599.8,121.1 L607.1,123.6 L614.2,126.2 L621.1,128.8 L627.6,131.6 L633.7,134.4 L639.4,137.3 L644.6,140.2 L649.4,143.0 L653.6,145.8 L657.2,148.6 L660.2,151.3 L662.7,153.9 L664.4,156.4 L665.6,158.8 L666.0,161.0 Z" fill="url(#g11)"/>
<path d="M529.7,147.5 Q579.2,154.5 624,170.6 Q580.8,170 529.7,147.5 Z" fill="#b9babc" stroke="#003a2c" stroke-width="0.7"/>
<g clip-path="url(#cres)">
<path d="M555.7,170.4 L562.7,138.4 A7.5,2.2 12.3 0 1 577.3,141.6 L570.3,173.6 A7.5,2.2 12.3 0 1 555.7,170.4 Z" fill="url(#g12)" stroke="#2a2a22" stroke-width="0.7" />
</g>
<path d="M698.2,171.5 L697.1,174.1 L695.2,176.4 L692.4,178.4 L688.8,180.2 L684.4,181.7 L679.2,182.9 L673.3,183.8 L666.7,184.5 L659.5,184.8 L651.7,184.8 L643.4,184.5 L634.6,183.9 L625.4,183.0 L615.9,181.8 L606.2,180.3 L596.3,178.6 L586.3,176.5 L576.2,174.3 L566.3,171.8 L556.4,169.1 L546.8,166.2 L537.4,163.1 L528.4,159.9 L519.8,156.6 L511.7,153.1 L504.1,149.6 L497.2,146.1 L490.9,142.6 L485.3,139.0 L480.4,135.5 L476.3,132.1 L473.1,128.8 L470.7,125.6 L469.1,122.5 L468.4,119.6 L468.6,116.9 L469.7,114.3 L471.6,112.0 L474.4,110.0 L478.0,108.2 L482.4,106.7 L487.6,105.5 L493.5,104.6 L500.1,103.9 L507.3,103.6 L515.1,103.6 L523.4,103.9 L532.2,104.5 L541.4,105.4 L550.9,106.6 L560.6,108.1 L570.5,109.8 L580.5,111.9 L590.6,114.1 L600.5,116.6 L610.4,119.3 L620.0,122.2 L629.4,125.3 L638.4,128.5 L647.0,131.8 L655.1,135.3 L662.7,138.8 L669.6,142.3 L675.9,145.8 L681.5,149.4 L686.4,152.9 L690.5,156.3 L693.7,159.6 L696.1,162.8 L697.7,165.9 L698.4,168.8 Z M665.8,163.0 L664.9,164.8 L663.4,166.5 L661.2,167.9 L658.4,169.1 L655.0,170.1 L651.0,170.9 L646.5,171.4 L641.4,171.6 L635.9,171.6 L629.9,171.4 L623.6,170.9 L616.9,170.2 L609.9,169.2 L602.6,168.0 L595.2,166.6 L587.7,164.9 L580.1,163.1 L572.4,161.1 L564.8,158.9 L557.4,156.5 L550.1,154.0 L543.0,151.4 L536.1,148.8 L529.6,146.0 L523.5,143.2 L517.8,140.3 L512.6,137.4 L507.8,134.6 L503.6,131.8 L500.0,129.0 L497.0,126.3 L494.5,123.7 L492.8,121.2 L491.6,118.8 L491.2,116.6 L491.4,114.6 L492.3,112.8 L493.8,111.1 L496.0,109.7 L498.8,108.5 L502.2,107.5 L506.2,106.7 L510.7,106.2 L515.8,106.0 L521.3,106.0 L527.3,106.2 L533.6,106.7 L540.3,107.4 L547.3,108.4 L554.6,109.6 L562.0,111.0 L569.5,112.7 L577.1,114.5 L584.8,116.5 L592.4,118.7 L599.8,121.1 L607.1,123.6 L614.2,126.2 L621.1,128.8 L627.6,131.6 L633.7,134.4 L639.4,137.3 L644.6,140.2 L649.4,143.0 L653.6,145.8 L657.2,148.6 L660.2,151.3 L662.7,153.9 L664.4,156.4 L665.6,158.8 L666.0,161.0 Z" fill="url(#g10)" fill-rule="evenodd" stroke="#003a2c" stroke-width="0.8"/>
<ellipse cx="593.5" cy="170.5" rx="12.0" ry="4.0" transform="rotate(12.0 593.5 170.5)" fill="#007a5c" stroke="#003a2c" stroke-width="0.6"/>
<ellipse cx="593.5" cy="171.0" rx="7.5" ry="2.3" transform="rotate(12.0 593.5 171.0)" fill="#6cc010" stroke="#2a5a00" stroke-width="0.5"/>
<path d="M519.8,357.1 L546.1,247.1 A12.5,3.8 13.4 0 1 570.5,252.9 L544.2,362.9 A12.5,3.8 13.4 0 1 519.8,357.1 Z" fill="url(#g13)" stroke="#2a2a22" stroke-width="0.7" />
<path d="M550.2,276.0 L553.7,251.0 A7.4,2.6 8.0 0 1 568.3,253.0 L564.8,278.0 A7.4,2.6 8.0 0 1 550.2,276.0 Z" fill="url(#g14)" stroke="#666" stroke-width="0.5" />
<path d="M520.1,236.2 L527.1,206.2 A41.0,13.9 13.1 0 1 606.9,224.8 L599.9,254.8 A41.0,13.9 13.1 0 1 520.1,236.2 Z" fill="url(#g15)" stroke="#2a2a22" stroke-width="0.7" />
<ellipse cx="567.0" cy="215.5" rx="41.0" ry="13.9" transform="rotate(13.1 567.0 215.5)" fill="#8cab2c" stroke="#2a2a22" stroke-width="0.7"/>
<ellipse cx="563.0" cy="212.5" rx="14.0" ry="5.0" transform="rotate(12.0 563.0 212.5)" fill="#9ab832" stroke="#2a2a22" stroke-width="0.5"/>
<path d="M568.3,228.9 L576.3,202.9 A7.0,2.1 17.1 0 1 589.7,207.1 L581.7,233.1 A7.0,2.1 17.1 0 1 568.3,228.9 Z" fill="url(#g16)" stroke="#2a2a22" stroke-width="0.7" />
<path d="M418.6,213.7 L427.6,168.7 A6.5,2.3 11.3 0 1 440.4,171.3 L431.4,216.3 A6.5,2.3 11.3 0 1 418.6,213.7 Z" fill="url(#g17)" stroke="#2a2a22" stroke-width="0.7" />
<path d="M419.6,163.0 L422.5,148.5 A15.2,5.0 11.3 0 1 452.3,154.5 L449.4,169.0 A15.2,5.0 11.3 0 1 419.6,163.0 Z" fill="url(#g18)" stroke="#2a2a22" stroke-width="0.7" />
<ellipse cx="437.4" cy="151.5" rx="15.2" ry="5.0" transform="rotate(11.3 437.4 151.5)" fill="#c8c0a8" stroke="#2a2a22" stroke-width="0.7"/>
<ellipse cx="437.4" cy="151.5" rx="9.1" ry="3.0" transform="rotate(12.0 437.4 151.5)" fill="#b8b19b" stroke="#444" stroke-width="0.45"/>
<polyline points="430.6,149.4 444.2,153.6" fill="none" stroke="#3a3a30" stroke-width="0.5"/>
<polyline points="436.0,148.8 438.8,154.2" fill="none" stroke="#3a3a30" stroke-width="0.5"/>
<polyline points="442.8,150.9 432.0,152.1" fill="none" stroke="#3a3a30" stroke-width="0.5"/>
<path d="M406.8,290.4 L422.8,209.4 A13.5,5.4 11.2 0 1 449.2,214.6 L433.2,295.6 A13.5,5.4 11.2 0 1 406.8,290.4 Z" fill="url(#g19)" stroke="#2a2a22" stroke-width="0.7" />
<path d="M419.1,190.7 L423.1,172.2 A20.3,10.2 12.2 0 1 462.7,180.8 L458.7,199.3 A20.3,10.2 12.2 0 1 419.1,190.7 Z" fill="url(#g20)" stroke="#2a2a22" stroke-width="0.7" />
<ellipse cx="442.9" cy="176.5" rx="20.3" ry="10.2" transform="rotate(12.2 442.9 176.5)" fill="#a6e48c" stroke="#2a2a22" stroke-width="0.7"/>
<path d="M335.9,190.2 L367.4,52.2 A17.0,5.1 12.9 0 1 400.6,59.8 L369.1,197.8 A17.0,5.1 12.9 0 1 335.9,190.2 Z" fill="url(#g21)" stroke="#2a2a22" stroke-width="0.7" />
<path d="M354.7,255.6 L369.2,188.6 A6.4,2.2 12.2 0 1 381.8,191.4 L367.3,258.4 A6.4,2.2 12.2 0 1 354.7,255.6 Z" fill="url(#g22)" stroke="#2a2a22" stroke-width="0.7" />
<path d="M365.5,184.1 L367.4,171.6 A12.4,4.1 8.6 0 1 392.0,175.4 L390.1,187.9 A12.4,4.1 8.6 0 1 365.5,184.1 Z" fill="url(#g23)" stroke="#2a2a22" stroke-width="0.7" />
<ellipse cx="379.7" cy="173.5" rx="12.4" ry="4.1" transform="rotate(8.6 379.7 173.5)" fill="#9cbc84" stroke="#2a2a22" stroke-width="0.7"/>
<ellipse cx="379.7" cy="173.5" rx="7.4" ry="2.5" transform="rotate(12.0 379.7 173.5)" fill="#90ad79" stroke="#444" stroke-width="0.45"/>
<polyline points="374.2,171.8 385.2,175.2" fill="none" stroke="#3a3a30" stroke-width="0.5"/>
<polyline points="378.6,171.3 380.8,175.7" fill="none" stroke="#3a3a30" stroke-width="0.5"/>
<polyline points="384.1,173.0 375.3,174.0" fill="none" stroke="#3a3a30" stroke-width="0.5"/>
<path d="M634.6,333.1 L654.1,245.1 A13.2,5.3 12.5 0 1 679.9,250.9 L660.4,338.9 A13.2,5.3 12.5 0 1 634.6,333.1 Z" fill="url(#g24)" stroke="#2a2a22" stroke-width="0.7" />
<path d="M651.8,240.9 L654.8,223.9 A20.5,11.5 10.0 0 1 695.2,231.1 L692.2,248.1 A20.5,11.5 10.0 0 1 651.8,240.9 Z" fill="url(#g25)" stroke="#2a2a22" stroke-width="0.7" />
<ellipse cx="675.0" cy="227.5" rx="20.5" ry="11.5" transform="rotate(10.0 675.0 227.5)" fill="#a6e48c" stroke="#2a2a22" stroke-width="0.7"/>
<path d="M694.5,262.5 L713.0,174.5 A16.9,5.1 11.9 0 1 746.0,181.5 L727.5,269.5 A16.9,5.1 11.9 0 1 694.5,262.5 Z" fill="url(#g26)" stroke="#2a2a22" stroke-width="0.7" />
<path d="M708.2,170.6 L715.1,136.0 A25.2,8.3 11.3 0 1 764.5,145.8 L757.6,180.4 A25.2,8.3 11.3 0 1 708.2,170.6 Z" fill="url(#g27)" stroke="#2a2a22" stroke-width="0.7" />
<ellipse cx="739.8" cy="140.9" rx="25.2" ry="8.3" transform="rotate(11.3 739.8 140.9)" fill="#14e414" stroke="#2a2a22" stroke-width="0.7"/>
<ellipse cx="740.3" cy="141.2" rx="15.6" ry="5.0" transform="rotate(11.0 740.3 141.2)" fill="#00c800" stroke="#2a2a22" stroke-width="0.6"/>
<polygon points="754.1,144.4 744.4,146.3 730.6,143.1 726.5,138.0 736.2,136.1 750.0,139.3" fill="#0cd80c" stroke="#0a4a0a" stroke-width="0.5" />
<polygon points="748.9,144.8 742.8,146.0 734.3,144.0 731.7,140.8 737.8,139.6 746.3,141.6" fill="#00c000" stroke="#0a4a0a" stroke-width="0.4" />
<polyline points="754.1,144.4 748.9,144.8" fill="none" stroke="#0a4a0a" stroke-width="0.4"/>
<polyline points="744.4,146.3 742.8,146.0" fill="none" stroke="#0a4a0a" stroke-width="0.4"/>
<polyline points="730.6,143.1 734.3,144.0" fill="none" stroke="#0a4a0a" stroke-width="0.4"/>
<polyline points="726.5,138.0 731.7,140.8" fill="none" stroke="#0a4a0a" stroke-width="0.4"/>
<polyline points="736.2,136.1 737.8,139.6" fill="none" stroke="#0a4a0a" stroke-width="0.4"/>
<polyline points="750.0,139.3 746.3,141.6" fill="none" stroke="#0a4a0a" stroke-width="0.4"/>
<path d="M713.6,328.8 L728.7,257.8 A6.0,2.1 12.0 0 1 740.5,260.2 L725.4,331.2 A6.0,2.1 12.0 0 1 713.6,328.8 Z" fill="url(#g28)" stroke="#2a2a22" stroke-width="0.7" />
<path d="M724.0,255.7 L725.7,243.7 A12.6,4.2 8.1 0 1 750.7,247.3 L749.0,259.3 A12.6,4.2 8.1 0 1 724.0,255.7 Z" fill="url(#g29)" stroke="#2a2a22" stroke-width="0.7" />
<ellipse cx="738.2" cy="245.5" rx="12.6" ry="4.2" transform="rotate(8.1 738.2 245.5)" fill="#9cbc84" stroke="#2a2a22" stroke-width="0.7"/>
<ellipse cx="738.2" cy="245.5" rx="7.6" ry="2.5" transform="rotate(12.0 738.2 245.5)" fill="#90ad79" stroke="#444" stroke-width="0.45"/>
<polyline points="732.6,243.8 743.8,247.2" fill="none" stroke="#3a3a30" stroke-width="0.5"/>
<polyline points="737.1,243.3 739.3,247.7" fill="none" stroke="#3a3a30" stroke-width="0.5"/>
<polyline points="742.7,245.0 733.7,246.0" fill="none" stroke="#3a3a30" stroke-width="0.5"/>
<polygon points="711.0,332.6 727.5,336.0 727.5,343.0 711.0,340.0" fill="#ee7ab8" />
<path d="M393.7,293.1 L726.7,359.1 A6.5,3.2 -78.8 0 0 729.3,346.3 L396.3,280.3 A6.5,3.2 -78.8 0 0 393.7,293.1 Z" fill="url(#g30)" stroke="#4a525a" stroke-width="0.5" />
<path d="M372.6,308.1 L728.6,382.7 A6.8,3.4 -78.2 0 0 731.4,369.3 L375.4,294.7 A6.8,3.4 -78.2 0 0 372.6,308.1 Z" fill="url(#g31)" stroke="#4a525a" stroke-width="0.5" />
<path d="M371.8,311.7 L343.8,305.6 A10.5,3.7 -77.7 0 1 348.2,285.0 L376.2,291.1 A10.5,3.7 -77.7 0 1 371.8,311.7 Z" fill="url(#g32)" stroke="#4a525a" stroke-width="0.5" />
<ellipse cx="346.0" cy="295.3" rx="10.5" ry="3.7" transform="rotate(-77.7 346.0 295.3)" fill="#9a9ea4" stroke="#4a525a" stroke-width="0.5"/>
<polyline points="353.8,286.2 349.4,306.8" fill="none" stroke="#4a4e54" stroke-width="0.8"/>
<polyline points="359.4,287.4 355.0,308.0" fill="none" stroke="#4a4e54" stroke-width="0.8"/>
<polyline points="365.0,288.7 360.6,309.3" fill="none" stroke="#4a4e54" stroke-width="0.8"/>
<polyline points="370.6,289.9 366.2,310.5" fill="none" stroke="#4a4e54" stroke-width="0.8"/>
<path d="M706.5,356.1 L728.5,360.6 A7.5,3.0 -78.4 0 0 731.5,346.0 L709.5,341.5 A7.5,3.0 -78.4 0 0 706.5,356.1 Z" fill="url(#g33)" stroke="#4a525a" stroke-width="0.5" />
<polyline points="714.0,342.3 710.8,357.1" fill="none" stroke="#4a4e54" stroke-width="0.8"/>
<polyline points="719.5,343.4 716.3,358.2" fill="none" stroke="#4a4e54" stroke-width="0.8"/>
<polyline points="725.0,344.6 721.8,359.3" fill="none" stroke="#4a4e54" stroke-width="0.8"/>
<path d="M710.5,379.5 L732.5,384.0 A7.5,3.0 -78.4 0 0 735.5,369.4 L713.5,364.9 A7.5,3.0 -78.4 0 0 710.5,379.5 Z" fill="url(#g34)" stroke="#4a525a" stroke-width="0.5" />
<polyline points="718.0,365.7 714.8,380.5" fill="none" stroke="#4a4e54" stroke-width="0.8"/>
<polyline points="723.5,366.8 720.3,381.6" fill="none" stroke="#4a4e54" stroke-width="0.8"/>
<polyline points="729.0,367.9 725.8,382.7" fill="none" stroke="#4a4e54" stroke-width="0.8"/>
<path d="M362.9,290.7 L377.9,220.7 A6.2,2.2 12.1 0 1 390.1,223.3 L375.1,293.3 A6.2,2.2 12.1 0 1 362.9,290.7 Z" fill="url(#g35)" stroke="#2a2a22" stroke-width="0.7" />
<path d="M373.6,217.6 L375.1,206.1 A11.0,3.6 7.4 0 1 396.9,208.9 L395.4,220.4 A11.0,3.6 7.4 0 1 373.6,217.6 Z" fill="url(#g36)" stroke="#2a2a22" stroke-width="0.7" />
<ellipse cx="386.0" cy="207.5" rx="11.0" ry="3.6" transform="rotate(7.4 386.0 207.5)" fill="#9cbc84" stroke="#2a2a22" stroke-width="0.7"/>
<ellipse cx="386.0" cy="207.5" rx="6.6" ry="2.2" transform="rotate(12.0 386.0 207.5)" fill="#90ad79" stroke="#444" stroke-width="0.45"/>
<polyline points="381.1,206.0 390.9,209.0" fill="none" stroke="#3a3a30" stroke-width="0.5"/>
<polyline points="385.0,205.6 387.0,209.4" fill="none" stroke="#3a3a30" stroke-width="0.5"/>
<polyline points="389.9,207.1 382.1,207.9" fill="none" stroke="#3a3a30" stroke-width="0.5"/>
<path d="M721.0,362.1 L732.5,291.1 A5.6,2.0 9.2 0 1 743.5,292.9 L732.0,363.9 A5.6,2.0 9.2 0 1 721.0,362.1 Z" fill="url(#g37)" stroke="#2a2a22" stroke-width="0.7" />
<path d="M730.7,289.4 L731.9,281.8 A10.0,3.3 9.0 0 1 751.7,285.0 L750.5,292.6 A10.0,3.3 9.0 0 1 730.7,289.4 Z" fill="url(#g38)" stroke="#2a2a22" stroke-width="0.7" />
<ellipse cx="741.8" cy="283.4" rx="10.0" ry="3.3" transform="rotate(9.0 741.8 283.4)" fill="#9cbc84" stroke="#2a2a22" stroke-width="0.7"/>
<ellipse cx="741.8" cy="283.4" rx="6.0" ry="2.0" transform="rotate(12.0 741.8 283.4)" fill="#90ad79" stroke="#444" stroke-width="0.45"/>
<polyline points="737.4,282.0 746.2,284.8" fill="none" stroke="#3a3a30" stroke-width="0.5"/>
<polyline points="740.9,281.6 742.7,285.2" fill="none" stroke="#3a3a30" stroke-width="0.5"/>
<polyline points="745.4,283.0 738.2,283.8" fill="none" stroke="#3a3a30" stroke-width="0.5"/>
<path d="M370.7,317.1 L389.8,230.4 A16.5,5.0 12.4 0 1 422.0,237.4 L402.9,324.1 A16.5,5.0 12.4 0 1 370.7,317.1 Z" fill="url(#g39)" stroke="#2a2a22" stroke-width="0.7" />
<path d="M384.1,223.7 L390.8,191.7 A24.8,8.2 11.8 0 1 439.4,201.9 L432.7,233.9 A24.8,8.2 11.8 0 1 384.1,223.7 Z" fill="url(#g40)" stroke="#2a2a22" stroke-width="0.7" />
<ellipse cx="415.1" cy="196.8" rx="24.8" ry="8.2" transform="rotate(11.8 415.1 196.8)" fill="#14e414" stroke="#2a2a22" stroke-width="0.7"/>
<ellipse cx="415.6" cy="197.1" rx="15.4" ry="4.9" transform="rotate(11.0 415.6 197.1)" fill="#00c800" stroke="#2a2a22" stroke-width="0.6"/>
<polygon points="429.2,200.3 419.6,202.1 406.0,198.9 402.0,193.9 411.6,192.1 425.2,195.3" fill="#0cd80c" stroke="#0a4a0a" stroke-width="0.5" />
<polygon points="424.0,200.7 418.1,201.8 409.7,199.8 407.2,196.7 413.1,195.6 421.5,197.6" fill="#00c000" stroke="#0a4a0a" stroke-width="0.4" />
<polyline points="429.2,200.3 424.0,200.7" fill="none" stroke="#0a4a0a" stroke-width="0.4"/>
<polyline points="419.6,202.1 418.1,201.8" fill="none" stroke="#0a4a0a" stroke-width="0.4"/>
<polyline points="406.0,198.9 409.7,199.8" fill="none" stroke="#0a4a0a" stroke-width="0.4"/>
<polyline points="402.0,193.9 407.2,196.7" fill="none" stroke="#0a4a0a" stroke-width="0.4"/>
<polyline points="411.6,192.1 413.1,195.6" fill="none" stroke="#0a4a0a" stroke-width="0.4"/>
<polyline points="425.2,195.3 421.5,197.6" fill="none" stroke="#0a4a0a" stroke-width="0.4"/>
<path d="M728.3,388.2 L744.9,302.9 A17.2,5.2 11.0 0 1 778.7,309.5 L762.1,394.8 A17.2,5.2 11.0 0 1 728.3,388.2 Z" fill="url(#g41)" stroke="#2a2a22" stroke-width="0.7" />
<path d="M742.1,296.1 L748.8,264.5 A25.4,8.4 12.0 0 1 798.4,275.1 L791.7,306.7 A25.4,8.4 12.0 0 1 742.1,296.1 Z" fill="url(#g42)" stroke="#2a2a22" stroke-width="0.7" />
<ellipse cx="773.6" cy="269.8" rx="25.4" ry="8.4" transform="rotate(12.0 773.6 269.8)" fill="#14e414" stroke="#2a2a22" stroke-width="0.7"/>
<ellipse cx="774.1" cy="270.1" rx="15.7" ry="5.0" transform="rotate(11.0 774.1 270.1)" fill="#00c800" stroke="#2a2a22" stroke-width="0.6"/>
<polygon points="788.0,273.4 778.2,275.3 764.3,272.0 760.2,266.8 770.0,264.9 783.9,268.2" fill="#0cd80c" stroke="#0a4a0a" stroke-width="0.5" />
<polygon points="782.7,273.7 776.7,274.9 768.0,272.9 765.5,269.7 771.5,268.5 780.2,270.5" fill="#00c000" stroke="#0a4a0a" stroke-width="0.4" />
<polyline points="788.0,273.4 782.7,273.7" fill="none" stroke="#0a4a0a" stroke-width="0.4"/>
<polyline points="778.2,275.3 776.7,274.9" fill="none" stroke="#0a4a0a" stroke-width="0.4"/>
<polyline points="764.3,272.0 768.0,272.9" fill="none" stroke="#0a4a0a" stroke-width="0.4"/>
<polyline points="760.2,266.8 765.5,269.7" fill="none" stroke="#0a4a0a" stroke-width="0.4"/>
<polyline points="770.0,264.9 771.5,268.5" fill="none" stroke="#0a4a0a" stroke-width="0.4"/>
<polyline points="783.9,268.2 780.2,270.5" fill="none" stroke="#0a4a0a" stroke-width="0.4"/>
<path d="M493.4,317.7 L506.3,245.2 A7.3,3.6 10.1 0 1 520.7,247.8 L507.8,320.2 A7.3,3.6 10.1 0 1 493.4,317.7 Z" fill="url(#g43)" stroke="#4a525a" stroke-width="0.5" />
<polygon points="493.4,317.7 507.8,320.2 496.5,327.4" fill="#8a949c" stroke="#4a525a" stroke-width="0.5" />
<ellipse cx="505.0" cy="283.0" rx="13.0" ry="4.4" transform="rotate(12.0 505.0 283.0)" fill="#98a2aa" stroke="#3a4248" stroke-width="0.6"/>
<ellipse cx="505.3" cy="281.8" rx="10.0" ry="3.0" transform="rotate(12.0 505.3 281.8)" fill="#aab4bc" stroke="#3a4248" stroke-width="0.4"/>
<path d="M498.4,280.4 L506.7,244.9 A7.0,3.5 13.2 0 1 520.3,248.1 L512.0,283.6 A7.0,3.5 13.2 0 1 498.4,280.4 Z" fill="url(#g44)" stroke="#4a525a" stroke-width="0.5" />
<path d="M526.5,313.9 L508.0,249.4 A6.8,3.4 -16.0 0 1 521.0,245.6 L539.5,310.1 A6.8,3.4 -16.0 0 1 526.5,313.9 Z" fill="url(#g45)" stroke="#4a525a" stroke-width="0.5" />
<ellipse cx="514.5" cy="247.5" rx="6.8" ry="3.4" transform="rotate(-16.0 514.5 247.5)" fill="#b8c2ca"/>
<path d="M585.5,335.5 L600.6,264.0 A7.3,3.6 11.9 0 1 614.8,267.0 L599.8,338.5 A7.3,3.6 11.9 0 1 585.5,335.5 Z" fill="url(#g46)" stroke="#4a525a" stroke-width="0.5" />
<polygon points="585.5,335.5 599.8,338.5 588.4,345.3" fill="#8a949c" stroke="#4a525a" stroke-width="0.5" />
<ellipse cx="597.8" cy="300.9" rx="13.0" ry="4.4" transform="rotate(12.0 597.8 300.9)" fill="#98a2aa" stroke="#3a4248" stroke-width="0.6"/>
<ellipse cx="598.1" cy="299.7" rx="10.0" ry="3.0" transform="rotate(12.0 598.1 299.7)" fill="#aab4bc" stroke="#3a4248" stroke-width="0.4"/>
<path d="M591.3,298.0 L601.0,263.6 A7.0,3.5 15.7 0 1 614.4,267.4 L604.7,301.8 A7.0,3.5 15.7 0 1 591.3,298.0 Z" fill="url(#g47)" stroke="#4a525a" stroke-width="0.5" />
<path d="M620.4,336.8 L602.1,268.3 A6.8,3.4 -15.0 0 1 615.3,264.7 L633.6,333.2 A6.8,3.4 -15.0 0 1 620.4,336.8 Z" fill="url(#g48)" stroke="#4a525a" stroke-width="0.5" />
<ellipse cx="608.7" cy="266.5" rx="6.8" ry="3.4" transform="rotate(-15.0 608.7 266.5)" fill="#b8c2ca"/>
<path d="M690.8,367.0 L686.8,341.0 A6.3,3.1 -8.7 0 1 699.2,339.0 L703.2,365.0 A6.3,3.1 -8.7 0 1 690.8,367.0 Z" fill="url(#g49)" stroke="#4a525a" stroke-width="0.5" />
<ellipse cx="693.0" cy="340.0" rx="6.3" ry="3.1" transform="rotate(-8.7 693.0 340.0)" fill="#b8c2ca" stroke="#4a525a" stroke-width="0.5"/>
<path d="M692.1,378.0 L688.1,371.0 A8.0,6.4 -29.7 0 1 701.9,363.0 L705.9,370.0 A8.0,6.4 -29.7 0 1 692.1,378.0 Z" fill="url(#g50)" stroke="#4a525a" stroke-width="0.5" />
<ellipse cx="702.7" cy="377.6" rx="7.6" ry="8.3" transform="rotate(0.0 702.7 377.6)" fill="#f0901c" stroke="#7a4a10" stroke-width="0.6"/>
<polyline points="698.5,377.6 707.0,377.6" fill="none" stroke="#8a8a90" stroke-width="1.8"/>
<polyline points="702.7,373.0 702.7,382.5" fill="none" stroke="#8a8a90" stroke-width="1.8"/>
<polygon points="513.2,309.0 540.2,302.1 559.1,320.0 552.2,346.0 528.2,354.0 508.2,335.0" fill="#a89e84" stroke="#2a2a22" stroke-width="0.7" />
<polygon points="512.9,305.8 539.9,298.9 558.8,316.8 551.9,342.8 527.9,350.8 507.9,331.8" fill="#d6cbb0" stroke="#2a2a22" stroke-width="0.8" />
<ellipse cx="533.9" cy="323.8" rx="16.0" ry="12.5" transform="rotate(8.0 533.9 323.8)" fill="url(#g51)" stroke="#6a6450" stroke-width="0.45"/>
<path d="M518.4,328.7 L518.1,326.1 A16.0,12.5 -8.1 0 1 549.7,321.5 L550.1,324.1 A16.0,12.5 -8.1 0 1 518.4,328.7 Z" fill="url(#g51)" stroke="#6a6450" stroke-width="0.45" />
<ellipse cx="534.3" cy="326.4" rx="16.0" ry="12.5" transform="rotate(8.0 534.3 326.4)" fill="url(#g51)" stroke="#6a6450" stroke-width="0.45"/>
<path d="M521.2,330.7 L520.8,328.3 A13.6,10.6 -8.1 0 1 547.7,324.5 L548.1,326.9 A13.6,10.6 -8.1 0 1 521.2,330.7 Z" fill="url(#g51)" stroke="#6a6450" stroke-width="0.45" />
<ellipse cx="534.6" cy="328.8" rx="13.6" ry="10.6" transform="rotate(8.0 534.6 328.8)" fill="url(#g51)" stroke="#6a6450" stroke-width="0.45"/>
<path d="M520.0,333.9 L519.6,330.9 A15.2,11.9 -8.1 0 1 549.7,326.7 L550.1,329.7 A15.2,11.9 -8.1 0 1 520.0,333.9 Z" fill="url(#g51)" stroke="#6a6450" stroke-width="0.45" />
<ellipse cx="535.0" cy="331.8" rx="15.2" ry="11.9" transform="rotate(8.0 535.0 331.8)" fill="url(#g51)" stroke="#6a6450" stroke-width="0.45"/>
<path d="M521.0,336.9 L520.6,333.9 A14.6,11.4 -8.1 0 1 549.5,329.7 L549.9,332.7 A14.6,11.4 -8.1 0 1 521.0,336.9 Z" fill="url(#g51)" stroke="#6a6450" stroke-width="0.45" />
<ellipse cx="535.5" cy="334.8" rx="14.6" ry="11.4" transform="rotate(8.0 535.5 334.8)" fill="url(#g51)" stroke="#6a6450" stroke-width="0.45"/>
<path d="M524.2,339.5 L523.8,336.5 A11.8,9.2 -8.1 0 1 547.2,333.1 L547.6,336.1 A11.8,9.2 -8.1 0 1 524.2,339.5 Z" fill="url(#g51)" stroke="#6a6450" stroke-width="0.45" />
<ellipse cx="535.9" cy="337.8" rx="11.8" ry="9.2" transform="rotate(8.0 535.9 337.8)" fill="url(#g51)" stroke="#6a6450" stroke-width="0.45"/>
<ellipse cx="535.9" cy="337.8" rx="10.0" ry="9.2" transform="rotate(8.0 535.9 337.8)" fill="url(#g51)" stroke="#3a3626" stroke-width="0.6"/>
<ellipse cx="536.0" cy="338.0" rx="7.6" ry="7.0" transform="rotate(8.0 536.0 338.0)" fill="#d8d0b4" stroke="#3a3626" stroke-width="0.6"/>
<ellipse cx="536.2" cy="338.2" rx="5.4" ry="5.2" transform="rotate(8.0 536.2 338.2)" fill="#f2ead2" stroke="#6a6650" stroke-width="0.5"/>
<polygon points="605.1,331.0 632.0,319.0 653.0,338.0 648.0,362.9 623.0,372.9 602.1,355.0" fill="#a89e84" stroke="#2a2a22" stroke-width="0.7" />
<polygon points="604.8,327.8 631.7,315.8 652.7,334.8 647.7,359.7 622.7,369.7 601.8,351.8" fill="#d6cbb0" stroke="#2a2a22" stroke-width="0.8" />
<ellipse cx="627.7" cy="343.8" rx="16.0" ry="12.5" transform="rotate(8.0 627.7 343.8)" fill="url(#g52)" stroke="#6a6450" stroke-width="0.45"/>
<path d="M612.6,349.8 L612.1,347.2 A16.0,12.5 -12.2 0 1 643.3,340.4 L643.9,343.0 A16.0,12.5 -12.2 0 1 612.6,349.8 Z" fill="url(#g52)" stroke="#6a6450" stroke-width="0.45" />
<ellipse cx="628.3" cy="346.4" rx="16.0" ry="12.5" transform="rotate(8.0 628.3 346.4)" fill="url(#g52)" stroke="#6a6450" stroke-width="0.45"/>
<path d="M615.5,351.6 L615.0,349.3 A13.6,10.6 -12.2 0 1 641.6,343.5 L642.1,345.9 A13.6,10.6 -12.2 0 1 615.5,351.6 Z" fill="url(#g52)" stroke="#6a6450" stroke-width="0.45" />
<ellipse cx="628.8" cy="348.8" rx="13.6" ry="10.6" transform="rotate(8.0 628.8 348.8)" fill="url(#g52)" stroke="#6a6450" stroke-width="0.45"/>
<path d="M614.6,354.9 L613.9,352.0 A15.2,11.9 -12.2 0 1 643.6,345.6 L644.3,348.5 A15.2,11.9 -12.2 0 1 614.6,354.9 Z" fill="url(#g52)" stroke="#6a6450" stroke-width="0.45" />
<ellipse cx="629.4" cy="351.7" rx="15.2" ry="11.9" transform="rotate(8.0 629.4 351.7)" fill="url(#g52)" stroke="#6a6450" stroke-width="0.45"/>
<path d="M615.8,357.8 L615.1,354.8 A14.6,11.4 -12.2 0 1 643.7,348.7 L644.3,351.6 A14.6,11.4 -12.2 0 1 615.8,357.8 Z" fill="url(#g52)" stroke="#6a6450" stroke-width="0.45" />
<ellipse cx="630.1" cy="354.7" rx="14.6" ry="11.4" transform="rotate(8.0 630.1 354.7)" fill="url(#g52)" stroke="#6a6450" stroke-width="0.45"/>
<path d="M619.2,360.2 L618.5,357.2 A11.8,9.2 -12.2 0 1 641.6,352.2 L642.2,355.2 A11.8,9.2 -12.2 0 1 619.2,360.2 Z" fill="url(#g52)" stroke="#6a6450" stroke-width="0.45" />
<ellipse cx="630.7" cy="357.7" rx="11.8" ry="9.2" transform="rotate(8.0 630.7 357.7)" fill="url(#g52)" stroke="#6a6450" stroke-width="0.45"/>
<ellipse cx="630.7" cy="357.7" rx="10.0" ry="9.2" transform="rotate(8.0 630.7 357.7)" fill="url(#g52)" stroke="#3a3626" stroke-width="0.6"/>
<ellipse cx="630.8" cy="357.9" rx="7.6" ry="7.0" transform="rotate(8.0 630.8 357.9)" fill="#d8d0b4" stroke="#3a3626" stroke-width="0.6"/>
<ellipse cx="631.0" cy="358.1" rx="5.4" ry="5.2" transform="rotate(8.0 631.0 358.1)" fill="#f2ead2" stroke="#6a6650" stroke-width="0.5"/>
<path d="M353.1,479.1 L360.0,449.9 A22.1,6.6 13.3 0 1 403.0,460.1 L396.1,489.3 A22.1,6.6 13.3 0 1 353.1,479.1 Z" fill="#c2417f" />
<path d="M358.5,449.6 L382.9,346.6 A23.6,7.1 13.3 0 1 428.9,357.4 L404.5,460.4 A23.6,7.1 13.3 0 1 358.5,449.6 Z" fill="url(#g53)" stroke="#1a3008" stroke-width="0.6" />
<ellipse cx="405.9" cy="350.5" rx="23.6" ry="7.1" transform="rotate(12.0 405.9 350.5)" fill="#5c8428" stroke="#1a3008" stroke-width="0.6"/>
<ellipse cx="406.9" cy="349.5" rx="18.9" ry="4.7" transform="rotate(12.0 406.9 349.5)" fill="#6a9432"/>
<ellipse cx="394.8" cy="386.0" rx="11.1" ry="36.0" transform="rotate(13.3 394.8 386.0)" fill="none" stroke="#1a3008" stroke-width="0.6"/>
<path d="M425.7,495.3 L432.2,466.1 A22.5,6.8 12.6 0 1 476.2,475.9 L469.6,505.2 A22.5,6.8 12.6 0 1 425.7,495.3 Z" fill="#c2417f" />
<path d="M430.8,465.7 L454.8,358.7 A24.0,7.2 12.6 0 1 501.6,369.3 L477.6,476.3 A24.0,7.2 12.6 0 1 430.8,465.7 Z" fill="url(#g54)" stroke="#1a3008" stroke-width="0.6" />
<ellipse cx="478.2" cy="362.5" rx="24.0" ry="7.2" transform="rotate(12.0 478.2 362.5)" fill="#5c8428" stroke="#1a3008" stroke-width="0.6"/>
<ellipse cx="479.2" cy="361.5" rx="19.2" ry="4.8" transform="rotate(12.0 479.2 361.5)" fill="#6a9432"/>
<ellipse cx="467.3" cy="399.3" rx="11.3" ry="37.3" transform="rotate(12.6 467.3 399.3)" fill="none" stroke="#1a3008" stroke-width="0.6"/>
<path d="M528.0,516.9 L534.5,487.6 A22.5,6.8 12.6 0 1 578.5,497.4 L571.9,526.7 A22.5,6.8 12.6 0 1 528.0,516.9 Z" fill="#c2417f" />
<path d="M533.1,487.3 L554.6,390.8 A24.0,7.2 12.6 0 1 601.4,401.2 L579.9,497.7 A24.0,7.2 12.6 0 1 533.1,487.3 Z" fill="url(#g55)" stroke="#1a3008" stroke-width="0.6" />
<ellipse cx="578.0" cy="394.5" rx="24.0" ry="7.2" transform="rotate(12.0 578.0 394.5)" fill="#5c8428" stroke="#1a3008" stroke-width="0.6"/>
<ellipse cx="579.0" cy="393.5" rx="19.2" ry="4.8" transform="rotate(12.0 579.0 393.5)" fill="#6a9432"/>
<ellipse cx="567.9" cy="427.8" rx="11.3" ry="33.6" transform="rotate(12.6 567.9 427.8)" fill="none" stroke="#1a3008" stroke-width="0.6"/>
<path d="M600.1,529.4 L606.7,500.2 A21.8,6.5 12.8 0 1 649.3,509.8 L642.6,539.1 A21.8,6.5 12.8 0 1 600.1,529.4 Z" fill="#c2417f" />
<path d="M605.3,499.9 L629.3,393.9 A23.3,7.0 12.8 0 1 674.7,404.1 L650.7,510.1 A23.3,7.0 12.8 0 1 605.3,499.9 Z" fill="url(#g56)" stroke="#1a3008" stroke-width="0.6" />
<ellipse cx="652.0" cy="397.5" rx="23.3" ry="7.0" transform="rotate(12.0 652.0 397.5)" fill="#5c8428" stroke="#1a3008" stroke-width="0.6"/>
<ellipse cx="653.0" cy="396.5" rx="18.6" ry="4.7" transform="rotate(12.0 653.0 396.5)" fill="#6a9432"/>
<ellipse cx="641.1" cy="434.0" rx="11.0" ry="37.0" transform="rotate(12.8 641.1 434.0)" fill="none" stroke="#1a3008" stroke-width="0.6"/>
<polygon points="338.8,470.0 707.0,542.3 699.6,585.5 329.9,512.9" fill="#8c3060" opacity="0.88" />
<polyline points="338.8,470.0 707.0,542.3" fill="none" stroke="#4a1838" stroke-width="0.6"/>
<polygon points="673.8,459.0 684.7,461.0 684.0,467.0 675.0,465.0" fill="#e6f8e2" />
<polygon points="680.0,484.0 690.0,486.0 696.0,520.0 690.0,541.0 687.0,520.0" fill="#e2f6de" opacity="0.9" />
<polyline points="334.0,395.0 358.7,397.4" fill="none" stroke="#f0fff0" stroke-width="1.2"/>
<polyline points="658.0,491.0 702.0,498.0" fill="none" stroke="#7a9a80" stroke-width="0.6"/>
<polyline points="352.0,494.6 470.0,517.8" fill="none" stroke="#a04474" stroke-width="3.2" opacity="0.55"/>
<polyline points="352.0,499.6 470.0,522.8" fill="none" stroke="#a04474" stroke-width="2.0" opacity="0.55"/>
<polyline points="352.0,503.6 600.0,552.3" fill="none" stroke="#a04474" stroke-width="2.4" opacity="0.55"/>
<polyline points="470.0,515.8 690.0,559.0" fill="none" stroke="#a04474" stroke-width="2.6" opacity="0.55"/>
<polyline points="470.0,521.8 690.0,565.0" fill="none" stroke="#a04474" stroke-width="2.0" opacity="0.55"/>
<polyline points="520.0,540.6 690.0,574.0" fill="none" stroke="#a04474" stroke-width="2.2" opacity="0.55"/>
<polyline points="395.0,493.0 430.0,499.9" fill="none" stroke="#a04474" stroke-width="1.6" opacity="0.55"/>
<polyline points="395.0,496.0 430.0,502.9" fill="none" stroke="#a04474" stroke-width="1.4" opacity="0.55"/>
<path d="M359.1,407.4 L373.1,341.4 A3.0,1.2 12.0 0 1 378.9,342.6 L364.9,408.6 A3.0,1.2 12.0 0 1 359.1,407.4 Z" fill="url(#g57)" stroke="#1a3008" stroke-width="0.5" />
<ellipse cx="376.0" cy="342.0" rx="3.0" ry="1.2" transform="rotate(12.0 376.0 342.0)" fill="#5a8a2a" stroke="#1a3008" stroke-width="0.5"/>
<path d="M664.8,471.2 L681.3,403.2 A3.3,1.3 13.6 0 1 687.7,404.8 L671.2,472.8 A3.3,1.3 13.6 0 1 664.8,471.2 Z" fill="url(#g58)" stroke="#1a3008" stroke-width="0.5" />
<ellipse cx="684.5" cy="404.0" rx="3.3" ry="1.3" transform="rotate(13.6 684.5 404.0)" fill="#5a8a2a" stroke="#1a3008" stroke-width="0.5"/>
<path d="M429.7,393.4 L452.7,274.2 A8.5,3.0 10.9 0 1 469.3,277.4 L446.3,396.6 A8.5,3.0 10.9 0 1 429.7,393.4 Z" fill="url(#g59)" stroke="#2a2a22" stroke-width="0.7" />
<path d="M447.4,270.4 L449.8,256.3 A16.0,5.3 9.7 0 1 481.4,261.7 L479.0,275.8 A16.0,5.3 9.7 0 1 447.4,270.4 Z" fill="url(#g60)" stroke="#2a2a22" stroke-width="0.7" />
<ellipse cx="465.6" cy="259.0" rx="16.0" ry="5.3" transform="rotate(9.7 465.6 259.0)" fill="#cdc5ad" stroke="#2a2a22" stroke-width="0.7"/>
<ellipse cx="465.6" cy="259.0" rx="9.6" ry="3.2" transform="rotate(12.0 465.6 259.0)" fill="#bdb59f" stroke="#444" stroke-width="0.45"/>
<polyline points="458.5,256.8 472.7,261.2" fill="none" stroke="#3a3a30" stroke-width="0.5"/>
<polyline points="464.2,256.2 467.0,261.8" fill="none" stroke="#3a3a30" stroke-width="0.5"/>
<polyline points="471.3,258.4 459.9,259.6" fill="none" stroke="#3a3a30" stroke-width="0.5"/>
<path d="M653.4,421.0 L675.8,323.0 A9.0,3.1 12.9 0 1 693.4,327.0 L671.0,425.0 A9.0,3.1 12.9 0 1 653.4,421.0 Z" fill="url(#g61)" stroke="#2a2a22" stroke-width="0.7" />
<path d="M670.7,318.4 L673.3,301.9 A16.5,5.4 9.0 0 1 705.9,307.1 L703.3,323.6 A16.5,5.4 9.0 0 1 670.7,318.4 Z" fill="url(#g62)" stroke="#2a2a22" stroke-width="0.7" />
<ellipse cx="689.6" cy="304.5" rx="16.5" ry="5.4" transform="rotate(9.0 689.6 304.5)" fill="#cdc5ad" stroke="#2a2a22" stroke-width="0.7"/>
<ellipse cx="689.6" cy="304.5" rx="9.9" ry="3.3" transform="rotate(12.0 689.6 304.5)" fill="#bdb59f" stroke="#444" stroke-width="0.45"/>
<polyline points="682.3,302.2 696.9,306.8" fill="none" stroke="#3a3a30" stroke-width="0.5"/>
<polyline points="688.1,301.6 691.1,307.4" fill="none" stroke="#3a3a30" stroke-width="0.5"/>
<polyline points="695.5,303.9 683.7,305.1" fill="none" stroke="#3a3a30" stroke-width="0.5"/>
<path d="M413.1,459.9 L420.1,423.9 A6.0,2.4 11.0 0 1 431.9,426.1 L424.9,462.1 A6.0,2.4 11.0 0 1 413.1,459.9 Z" fill="url(#g63)" stroke="#4a525a" stroke-width="0.5" />
<path d="M590.2,496.2 L608.7,391.2 A4.4,1.8 10.0 0 1 617.3,392.8 L598.8,497.8 A4.4,1.8 10.0 0 1 590.2,496.2 Z" fill="url(#g64)" stroke="#4a525a" stroke-width="0.5" />
<ellipse cx="414.0" cy="462.0" rx="2.6" ry="2.3" transform="rotate(0.0 414.0 462.0)" fill="#e8eef2" stroke="#8090a0" stroke-width="0.4"/>
<ellipse cx="420.0" cy="464.0" rx="2.6" ry="2.3" transform="rotate(0.0 420.0 464.0)" fill="#e8eef2" stroke="#8090a0" stroke-width="0.4"/>
<ellipse cx="426.0" cy="463.0" rx="2.6" ry="2.3" transform="rotate(0.0 426.0 463.0)" fill="#e8eef2" stroke="#8090a0" stroke-width="0.4"/>
<ellipse cx="590.0" cy="498.0" rx="2.6" ry="2.3" transform="rotate(0.0 590.0 498.0)" fill="#e8eef2" stroke="#8090a0" stroke-width="0.4"/>
<ellipse cx="596.0" cy="500.0" rx="2.6" ry="2.3" transform="rotate(0.0 596.0 500.0)" fill="#e8eef2" stroke="#8090a0" stroke-width="0.4"/>
<ellipse cx="602.0" cy="499.0" rx="2.6" ry="2.3" transform="rotate(0.0 602.0 499.0)" fill="#e8eef2" stroke="#8090a0" stroke-width="0.4"/>
<polyline points="424.5,275.3 431.0,301.5 413.8,372.9" fill="none" stroke="#e060a8" stroke-width="0.9"/>
<polyline points="424.5,275.3 417.9,304.8 409.0,335.0" fill="none" stroke="#e060a8" stroke-width="0.9"/>
<polyline points="454.8,348.0 460.7,365.0 497.7,372.9" fill="none" stroke="#e060a8" stroke-width="0.9"/>
<polyline points="489.7,350.0 496.7,362.0 530.0,369.0" fill="none" stroke="#e060a8" stroke-width="0.9"/>
<polyline points="513.0,428.0 521.5,446.0 527.6,428.0" fill="none" stroke="#e060a8" stroke-width="0.9"/>
<polyline points="610.5,388.0 613.0,396.0 618.0,390.0" fill="none" stroke="#e060a8" stroke-width="0.9"/>
<polyline points="548.9,294.9 553.9,309.8" fill="none" stroke="#e060a8" stroke-width="1.0"/>
<polyline points="457.7,333.0 530.0,345.0 598.0,357.0" fill="none" stroke="#3060e0" stroke-width="0.8"/>
<polyline points="431.0,432.0 424.0,460.0" fill="none" stroke="#3060e0" stroke-width="0.7"/>
<polyline points="610.8,385.0 619.0,388.0 627.7,386.0" fill="none" stroke="#3060e0" stroke-width="0.9"/>
<text x="527.5" y="305" font-size="10.5" fill="#2040f0">ZC</text>
<path d="M546,306.8 L541,335 L534,354 L537,334 Z" fill="#7088f0" stroke="#4060e0" stroke-width="0.5" />
<path d="M533,360 L539,362 L537.5,373 Z" fill="#e82020" />
<polyline points="540.0,360.7 585.0,370.0" fill="none" stroke="#20c020" stroke-width="1.1"/>
<path d="M229.5,354.9 L253.7,241.0 A42.8,12.0 12.9 0 1 337.1,260.0 L309.5,373.1 A41.0,11.5 12.9 0 1 229.5,354.9 Z" fill="url(#g65)" stroke="#2a2a22" stroke-width="0.7" />
<path d="M250.8,238.1 L255.6,218.1 A47.8,13.1 13.5 0 1 348.6,240.5 L343.8,260.5 A47.8,13.1 13.5 0 1 250.8,238.1 Z" fill="url(#g66)" stroke="#2a2a22" stroke-width="0.7" />
<ellipse cx="302.1" cy="229.3" rx="47.8" ry="13.1" transform="rotate(13.5 302.1 229.3)" fill="#f2df9c" stroke="#2a2a22" stroke-width="0.7"/>
<ellipse cx="302.5" cy="228.4" rx="37.3" ry="10.3" transform="rotate(12.7 302.5 228.4)" fill="url(#g68)" stroke="#2a2a22" stroke-width="0.7"/>
<g clip-path="url(#c67)">
<ellipse cx="302.0" cy="232.9" rx="29.5" ry="7.6" transform="rotate(12.7 302.0 232.9)" fill="#d0b074" stroke="#2a2a22" stroke-width="0.6"/>
<ellipse cx="301.1" cy="236.9" rx="15.8" ry="2.6" transform="rotate(12.7 301.1 236.9)" fill="#3478e4"/>
</g>
<ellipse cx="302.5" cy="228.4" rx="37.3" ry="10.3" transform="rotate(12.7 302.5 228.4)" fill="none" stroke="#2a2a22" stroke-width="0.7"/>
<path d="M793.3,469.2 L817.6,357.0 A42.4,11.9 12.7 0 1 900.4,375.6 L874.1,487.4 A41.4,11.6 12.7 0 1 793.3,469.2 Z" fill="url(#g69)" stroke="#2a2a22" stroke-width="0.7" />
<path d="M813.3,354.2 L817.1,333.7 A48.2,13.3 10.5 0 1 911.9,351.3 L908.1,371.8 A48.2,13.3 10.5 0 1 813.3,354.2 Z" fill="url(#g70)" stroke="#2a2a22" stroke-width="0.7" />
<ellipse cx="864.5" cy="342.5" rx="48.2" ry="13.3" transform="rotate(10.5 864.5 342.5)" fill="#f2df9c" stroke="#2a2a22" stroke-width="0.7"/>
<ellipse cx="864.9" cy="341.6" rx="37.6" ry="10.4" transform="rotate(12.7 864.9 341.6)" fill="url(#g72)" stroke="#2a2a22" stroke-width="0.7"/>
<g clip-path="url(#c71)">
<ellipse cx="864.4" cy="346.1" rx="29.7" ry="7.7" transform="rotate(12.7 864.4 346.1)" fill="#d0b074" stroke="#2a2a22" stroke-width="0.6"/>
<ellipse cx="863.5" cy="350.1" rx="15.9" ry="2.7" transform="rotate(12.7 863.5 350.1)" fill="#3478e4"/>
</g>
<ellipse cx="864.9" cy="341.6" rx="37.6" ry="10.4" transform="rotate(12.7 864.9 341.6)" fill="none" stroke="#2a2a22" stroke-width="0.7"/>
<path d="M390.2,574.5 L390.2,567.5 A9.5,4.0 0.0 0 1 409.2,567.5 L409.2,574.5 A9.5,4.0 0.0 0 1 390.2,574.5 Z" fill="url(#g73)" stroke="#1a4a70" stroke-width="0.5" />
<ellipse cx="399.7" cy="567.5" rx="9.5" ry="4.0" transform="rotate(0.0 399.7 567.5)" fill="#58b4ec" stroke="#1a4a70" stroke-width="0.5"/>
<path d="M623.0,621.0 L623.0,614.0 A9.5,4.0 0.0 0 1 642.0,614.0 L642.0,621.0 A9.5,4.0 0.0 0 1 623.0,621.0 Z" fill="url(#g74)" stroke="#1a4a70" stroke-width="0.5" />
<ellipse cx="632.5" cy="614.0" rx="9.5" ry="4.0" transform="rotate(0.0 632.5 614.0)" fill="#58b4ec" stroke="#1a4a70" stroke-width="0.5"/>
<path d="M337.5,512 a8,8 0 0 1 16,3.2 Z" fill="#f09018" stroke="#6a4a10" stroke-width="0.5" />
<path d="M648.5,572 a8,8 0 0 1 16,3.2 Z" fill="#f09018" stroke="#6a4a10" stroke-width="0.5" />
<polygon points="426.0,676.4 432.6,648.2 458.0,640.3 478.7,658.6 472.1,687.7 446.7,694.3" fill="#aca890" stroke="#3a3626" stroke-width="0.8" />
<polygon points="432.6,648.2 458.0,640.3 460.0,643.5 433.7,651.7" fill="#d8d0b4" stroke="#3a3626" stroke-width="0.6" />
<ellipse cx="453.3" cy="664.2" rx="15.5" ry="9.6" transform="rotate(8.0 453.3 664.2)" fill="url(#g75)" stroke="#3a3626" stroke-width="0.55"/>
<path d="M438.5,669.4 L438.0,666.8 A15.5,9.6 -9.6 0 1 468.6,661.6 L469.0,664.2 A15.5,9.6 -9.6 0 1 438.5,669.4 Z" fill="url(#g75)" stroke="#3a3626" stroke-width="0.55" />
<ellipse cx="453.7" cy="666.8" rx="15.5" ry="9.6" transform="rotate(8.0 453.7 666.8)" fill="url(#g75)" stroke="#3a3626" stroke-width="0.55"/>
<path d="M440.9,671.4 L440.5,669.0 A13.4,8.3 -9.6 0 1 467.0,664.6 L467.4,667.0 A13.4,8.3 -9.6 0 1 440.9,671.4 Z" fill="url(#g75)" stroke="#3a3626" stroke-width="0.55" />
<ellipse cx="454.2" cy="669.2" rx="13.4" ry="8.3" transform="rotate(8.0 454.2 669.2)" fill="url(#g75)" stroke="#3a3626" stroke-width="0.55"/>
<path d="M439.9,674.7 L439.4,671.7 A15.0,9.3 -9.6 0 1 468.9,666.7 L469.4,669.7 A15.0,9.3 -9.6 0 1 439.9,674.7 Z" fill="url(#g75)" stroke="#3a3626" stroke-width="0.55" />
<ellipse cx="454.7" cy="672.2" rx="15.0" ry="9.3" transform="rotate(8.0 454.7 672.2)" fill="url(#g75)" stroke="#3a3626" stroke-width="0.55"/>
<path d="M441.0,677.6 L440.5,674.6 A14.4,8.9 -9.6 0 1 468.9,669.8 L469.4,672.8 A14.4,8.9 -9.6 0 1 441.0,677.6 Z" fill="url(#g75)" stroke="#3a3626" stroke-width="0.55" />
<ellipse cx="455.2" cy="675.2" rx="14.4" ry="8.9" transform="rotate(8.0 455.2 675.2)" fill="url(#g75)" stroke="#3a3626" stroke-width="0.55"/>
<path d="M444.2,680.1 L443.7,677.1 A11.6,7.2 -9.6 0 1 466.6,673.3 L467.1,676.3 A11.6,7.2 -9.6 0 1 444.2,680.1 Z" fill="url(#g75)" stroke="#3a3626" stroke-width="0.55" />
<ellipse cx="455.7" cy="678.2" rx="11.6" ry="7.2" transform="rotate(8.0 455.7 678.2)" fill="url(#g75)" stroke="#3a3626" stroke-width="0.55"/>
<ellipse cx="456.0" cy="680.8" rx="9.8" ry="8.8" transform="rotate(8.0 456.0 680.8)" fill="url(#g75)" stroke="#3a3626" stroke-width="0.6"/>
<ellipse cx="456.1" cy="681.0" rx="7.6" ry="7.0" transform="rotate(8.0 456.1 681.0)" fill="#d8d0b4" stroke="#3a3626" stroke-width="0.6"/>
<ellipse cx="456.3" cy="681.2" rx="5.4" ry="5.2" transform="rotate(8.0 456.3 681.2)" fill="#f2ead2" stroke="#6a6650" stroke-width="0.5"/>
<polygon points="519.0,694.4 525.6,666.2 551.0,658.3 571.7,676.6 565.1,705.7 539.7,712.3" fill="#aca890" stroke="#3a3626" stroke-width="0.8" />
<polygon points="525.6,666.2 551.0,658.3 553.0,661.5 526.7,669.7" fill="#d8d0b4" stroke="#3a3626" stroke-width="0.6" />
<ellipse cx="546.3" cy="682.2" rx="15.5" ry="9.6" transform="rotate(8.0 546.3 682.2)" fill="url(#g76)" stroke="#3a3626" stroke-width="0.55"/>
<path d="M531.5,687.4 L531.0,684.8 A15.5,9.6 -9.6 0 1 561.6,679.6 L562.0,682.2 A15.5,9.6 -9.6 0 1 531.5,687.4 Z" fill="url(#g76)" stroke="#3a3626" stroke-width="0.55" />
<ellipse cx="546.7" cy="684.8" rx="15.5" ry="9.6" transform="rotate(8.0 546.7 684.8)" fill="url(#g76)" stroke="#3a3626" stroke-width="0.55"/>
<path d="M533.9,689.4 L533.5,687.0 A13.4,8.3 -9.6 0 1 560.0,682.6 L560.4,685.0 A13.4,8.3 -9.6 0 1 533.9,689.4 Z" fill="url(#g76)" stroke="#3a3626" stroke-width="0.55" />
<ellipse cx="547.1" cy="687.2" rx="13.4" ry="8.3" transform="rotate(8.0 547.1 687.2)" fill="url(#g76)" stroke="#3a3626" stroke-width="0.55"/>
<path d="M532.9,692.7 L532.4,689.7 A15.0,9.3 -9.6 0 1 561.9,684.7 L562.4,687.7 A15.0,9.3 -9.6 0 1 532.9,692.7 Z" fill="url(#g76)" stroke="#3a3626" stroke-width="0.55" />
<ellipse cx="547.7" cy="690.2" rx="15.0" ry="9.3" transform="rotate(8.0 547.7 690.2)" fill="url(#g76)" stroke="#3a3626" stroke-width="0.55"/>
<path d="M534.0,695.6 L533.5,692.6 A14.4,8.9 -9.6 0 1 561.9,687.8 L562.4,690.8 A14.4,8.9 -9.6 0 1 534.0,695.6 Z" fill="url(#g76)" stroke="#3a3626" stroke-width="0.55" />
<ellipse cx="548.2" cy="693.2" rx="14.4" ry="8.9" transform="rotate(8.0 548.2 693.2)" fill="url(#g76)" stroke="#3a3626" stroke-width="0.55"/>
<path d="M537.2,698.1 L536.7,695.1 A11.6,7.2 -9.6 0 1 559.6,691.3 L560.1,694.3 A11.6,7.2 -9.6 0 1 537.2,698.1 Z" fill="url(#g76)" stroke="#3a3626" stroke-width="0.55" />
<ellipse cx="548.7" cy="696.2" rx="11.6" ry="7.2" transform="rotate(8.0 548.7 696.2)" fill="url(#g76)" stroke="#3a3626" stroke-width="0.55"/>
<ellipse cx="549.0" cy="698.8" rx="9.8" ry="8.8" transform="rotate(8.0 549.0 698.8)" fill="url(#g76)" stroke="#3a3626" stroke-width="0.6"/>
<ellipse cx="549.1" cy="699.0" rx="7.6" ry="7.0" transform="rotate(8.0 549.1 699.0)" fill="#d8d0b4" stroke="#3a3626" stroke-width="0.6"/>
<ellipse cx="549.3" cy="699.2" rx="5.4" ry="5.2" transform="rotate(8.0 549.3 699.2)" fill="#f2ead2" stroke="#6a6650" stroke-width="0.5"/>
<rect x="399" y="373.2" width="212" height="54.2" fill="#000"/>
<text class="lbl" x="426.5" y="413.5" font-size="31" fill="#fff" letter-spacing="15" font-weight="300">图文设计</text>
<text x="15.5" y="787.5" font-size="10" fill="#18a018">Y</text>
<path d="M1,776 l10,3 l-10,3 Z" fill="#18a018" />
<path d="M0,756 q4,0 4,6 l0,12 q0,4 -4,5 Z" fill="#d8d8d8" stroke="#aaa" stroke-width="0.5" />
<polyline points="0.0,138.0 59.0,138.0" fill="none" stroke="#3c4a3c" stroke-width="0.9"/>
<polyline points="122.0,138.0 214.0,138.0" fill="none" stroke="#3c4a3c" stroke-width="0.9"/>
<polyline points="214.0,138.0 300.0,138.0" fill="none" stroke="#2848b8" stroke-width="0.9"/>
<polyline points="300.0,138.0 348.0,138.0" fill="none" stroke="#3c4a3c" stroke-width="0.9"/>
<polyline points="348.0,138.0 388.0,138.0" fill="none" stroke="#d060c0" stroke-width="0.9"/>
<polyline points="388.0,138.0 462.0,138.0" fill="none" stroke="#3c4a3c" stroke-width="0.9"/>
<polyline points="462.0,138.0 662.0,138.0" fill="none" stroke="#e05878" stroke-width="0.9"/>
<polyline points="662.0,138.0 716.0,138.0" fill="none" stroke="#3c4a3c" stroke-width="0.9"/>
<polyline points="716.0,138.0 764.0,138.0" fill="none" stroke="#d060c0" stroke-width="0.9"/>
<polyline points="764.0,138.0 1010.0,138.0" fill="none" stroke="#3c4a3c" stroke-width="0.9"/>
</g>
<g shape-rendering="auto">
<rect x="0" y="0" width="1010" height="130" fill="#d4d4d4"/>
<rect x="0" y="108" width="1010" height="21" fill="#dbdbdb"/>
<rect x="0" y="107.5" width="1010" height="1" fill="#e9e9e9"/>
<rect x="0" y="128.5" width="1010" height="1.5" fill="#8e8e8e"/>
<rect x="0" y="127.5" width="1010" height="1" fill="#b8b8b8"/>
<rect x="443" y="108" width="1" height="20" fill="#f2f2f2"/>
<rect x="0" y="10.5" width="112" height="1" fill="#b4b4b4"/>
<rect x="0" y="11.5" width="112" height="1" fill="#ececec"/>
<rect x="112" y="0" width="1" height="11" fill="#b4b4b4"/>
<rect x="264" y="10.5" width="746" height="1" fill="#b4b4b4"/>
<rect x="264" y="11.5" width="746" height="1" fill="#ececec"/>
<rect x="264" y="0" width="1" height="11" fill="#ececec"/>
<rect x="0" y="45" width="1010" height="1" fill="#b4b4b4"/>
<rect x="0" y="46" width="1010" height="1" fill="#ececec"/>
<rect x="16" y="78" width="994" height="1" fill="#b4b4b4"/>
<rect x="0" y="79" width="1010" height="1" fill="#e6e6e6"/>
<rect x="64" y="12" width="1" height="33" fill="#b4b4b4"/>
<rect x="65" y="12" width="1" height="33" fill="#ececec"/>
<rect x="210" y="12" width="1" height="33" fill="#b4b4b4"/>
<rect x="211" y="12" width="1" height="33" fill="#ececec"/>
<rect x="996" y="12" width="1" height="33" fill="#b4b4b4"/>
<rect x="997" y="12" width="1" height="33" fill="#ececec"/>
<rect x="16" y="47" width="1" height="31" fill="#ececec"/>
<rect x="182" y="50" width="1" height="26" fill="#b4b4b4"/>
<rect x="183" y="50" width="1" height="26" fill="#ececec"/>
<rect x="300" y="50" width="1" height="26" fill="#b4b4b4"/>
<rect x="301" y="50" width="1" height="26" fill="#ececec"/>
<rect x="410" y="47" width="1" height="31" fill="#b4b4b4"/>
<rect x="428" y="47" width="1" height="31" fill="#ececec"/>
<rect x="262" y="83" width="1" height="22" fill="#b4b4b4"/>
<rect x="263" y="83" width="1" height="22" fill="#ececec"/>
<rect x="70" y="18" width="2" height="2" fill="#f4f4f4"/>
<rect x="70" y="18" width="1" height="1" fill="#888"/>
<rect x="70" y="22" width="2" height="2" fill="#f4f4f4"/>
<rect x="70" y="22" width="1" height="1" fill="#888"/>
<rect x="70" y="26" width="2" height="2" fill="#f4f4f4"/>
<rect x="70" y="26" width="1" height="1" fill="#888"/>
<rect x="70" y="30" width="2" height="2" fill="#f4f4f4"/>
<rect x="70" y="30" width="1" height="1" fill="#888"/>
<rect x="70" y="34" width="2" height="2" fill="#f4f4f4"/>
<rect x="70" y="34" width="1" height="1" fill="#888"/>
<rect x="70" y="38" width="2" height="2" fill="#f4f4f4"/>
<rect x="70" y="38" width="1" height="1" fill="#888"/>
<rect x="216" y="18" width="2" height="2" fill="#f4f4f4"/>
<rect x="216" y="18" width="1" height="1" fill="#888"/>
<rect x="216" y="22" width="2" height="2" fill="#f4f4f4"/>
<rect x="216" y="22" width="1" height="1" fill="#888"/>
<rect x="216" y="26" width="2" height="2" fill="#f4f4f4"/>
<rect x="216" y="26" width="1" height="1" fill="#888"/>
<rect x="216" y="30" width="2" height="2" fill="#f4f4f4"/>
<rect x="216" y="30" width="1" height="1" fill="#888"/>
<rect x="216" y="34" width="2" height="2" fill="#f4f4f4"/>
<rect x="216" y="34" width="1" height="1" fill="#888"/>
<rect x="216" y="38" width="2" height="2" fill="#f4f4f4"/>
<rect x="216" y="38" width="1" height="1" fill="#888"/>
<rect x="1003" y="18" width="2" height="2" fill="#f4f4f4"/>
<rect x="1003" y="18" width="1" height="1" fill="#888"/>
<rect x="1003" y="22" width="2" height="2" fill="#f4f4f4"/>
<rect x="1003" y="22" width="1" height="1" fill="#888"/>
<rect x="1003" y="26" width="2" height="2" fill="#f4f4f4"/>
<rect x="1003" y="26" width="1" height="1" fill="#888"/>
<rect x="1003" y="30" width="2" height="2" fill="#f4f4f4"/>
<rect x="1003" y="30" width="1" height="1" fill="#888"/>
<rect x="1003" y="34" width="2" height="2" fill="#f4f4f4"/>
<rect x="1003" y="34" width="1" height="1" fill="#888"/>
<rect x="1003" y="38" width="2" height="2" fill="#f4f4f4"/>
<rect x="1003" y="38" width="1" height="1" fill="#888"/>
<rect x="21" y="52" width="2" height="2" fill="#f4f4f4"/>
<rect x="21" y="52" width="1" height="1" fill="#888"/>
<rect x="21" y="56" width="2" height="2" fill="#f4f4f4"/>
<rect x="21" y="56" width="1" height="1" fill="#888"/>
<rect x="21" y="60" width="2" height="2" fill="#f4f4f4"/>
<rect x="21" y="60" width="1" height="1" fill="#888"/>
<rect x="21" y="64" width="2" height="2" fill="#f4f4f4"/>
<rect x="21" y="64" width="1" height="1" fill="#888"/>
<rect x="21" y="68" width="2" height="2" fill="#f4f4f4"/>
<rect x="21" y="68" width="1" height="1" fill="#888"/>
<rect x="21" y="72" width="2" height="2" fill="#f4f4f4"/>
<rect x="21" y="72" width="1" height="1" fill="#888"/>
<rect x="433" y="52" width="2" height="2" fill="#f4f4f4"/>
<rect x="433" y="52" width="1" height="1" fill="#888"/>
<rect x="433" y="56" width="2" height="2" fill="#f4f4f4"/>
<rect x="433" y="56" width="1" height="1" fill="#888"/>
<rect x="433" y="60" width="2" height="2" fill="#f4f4f4"/>
<rect x="433" y="60" width="1" height="1" fill="#888"/>
<rect x="433" y="64" width="2" height="2" fill="#f4f4f4"/>
<rect x="433" y="64" width="1" height="1" fill="#888"/>
<rect x="433" y="68" width="2" height="2" fill="#f4f4f4"/>
<rect x="433" y="68" width="1" height="1" fill="#888"/>
<rect x="433" y="72" width="2" height="2" fill="#f4f4f4"/>
<rect x="433" y="72" width="1" height="1" fill="#888"/>
<rect x="269" y="0" width="2" height="2" fill="#f4f4f4"/>
<rect x="269" y="0" width="1" height="1" fill="#888"/>
<rect x="269" y="4" width="2" height="2" fill="#f4f4f4"/>
<rect x="269" y="4" width="1" height="1" fill="#888"/>
<path d="M100.0,1.2999999999999998 l7,0 l-3.5,4 Z" fill="#111"/>
<path d="M52.7,35.5 l7,0 l-3.5,4 Z" fill="#111"/>
<path d="M198.5,35.5 l7,0 l-3.5,4 Z" fill="#111"/>
<path d="M399.1,69.5 l7,0 l-3.5,4 Z" fill="#111"/>
<path d="M780.0,26.5 l7,0 l-3.5,4 Z" fill="#111"/>
<path d="M884.5,26.5 l7,0 l-3.5,4 Z" fill="#111"/>
<path d="M989.0,35.5 l7,0 l-3.5,4 Z" fill="#111"/>
<rect x="7.5" y="0" width="24" height="6.5" fill="#c6c6c6"/>
<rect x="39" y="0" width="24" height="6.5" fill="#c6c6c6"/>
<rect x="70" y="0" width="24" height="6.5" fill="#c6c6c6"/>
<rect x="10" y="0" width="17" height="2.5" fill="#3030e0"/><rect x="12" y="0" width="13" height="1.5" fill="#fff"/>
<rect x="43" y="0" width="16" height="2.5" fill="#2828e8"/><rect x="45" y="0" width="5" height="2" fill="#00d060"/><rect x="52" y="0" width="5" height="2" fill="#00d060"/><rect x="50.5" y="0" width="1" height="3" fill="#e00"/>
<rect x="75" y="0" width="14" height="1.5" fill="#2828e8"/>
<rect x="275" y="0" width="24" height="6.5" fill="#c6c6c6"/>
<path d="M281,0 l0,3 q6,3 12,0 l0,-3" fill="#fff" stroke="#2020e0" stroke-width="1"/>
<rect x="286.5" y="0" width="1" height="5" fill="#e01010"/>
<rect x="306" y="0" width="24" height="6.5" fill="#c6c6c6"/>
<path d="M314,0 l0,4 l8,0 l0,-4" fill="#fff" stroke="#2020e0" stroke-width="1"/>
<rect x="317.5" y="0" width="1" height="5" fill="#e01010"/>
<rect x="337" y="0" width="24" height="6.5" fill="#c6c6c6"/>
<path d="M342,0 l0,3 l14,0 l0,-3" fill="#e8e8ff" stroke="#2020e0" stroke-width="1"/>
<rect x="348.5" y="0" width="1" height="5" fill="#e01010"/>
<rect x="368" y="0" width="24" height="6.5" fill="#c6c6c6"/>
<path d="M377,0 l0,5 l6,0 l0,-5" fill="#fff" stroke="#2020e0" stroke-width="1"/>
<rect x="379.5" y="0" width="1" height="5" fill="#e01010"/>
<rect x="399" y="0" width="24" height="6.5" fill="#c6c6c6"/>
<path d="M405,0 l0,3 q6,3 12,0 l0,-3" fill="#fff" stroke="#2020e0" stroke-width="1"/>
<rect x="410.5" y="0" width="1" height="5" fill="#e01010"/>
<rect x="430" y="0" width="24" height="6.5" fill="#c6c6c6"/>
<path d="M438,0 l0,4 l8,0 l0,-4" fill="#fff" stroke="#2020e0" stroke-width="1"/>
<rect x="441.5" y="0" width="1" height="5" fill="#e01010"/>
<rect x="461" y="0" width="24" height="6.5" fill="#c6c6c6"/>
<path d="M466,0 l0,3 l14,0 l0,-3" fill="#e8e8ff" stroke="#2020e0" stroke-width="1"/>
<rect x="472.5" y="0" width="1" height="5" fill="#e01010"/>
<rect x="492" y="0" width="24" height="6.5" fill="#c6c6c6"/>
<path d="M501,0 l0,5 l6,0 l0,-5" fill="#fff" stroke="#2020e0" stroke-width="1"/>
<rect x="503.5" y="0" width="1" height="5" fill="#e01010"/>
<rect x="523" y="0" width="24" height="6.5" fill="#c6c6c6"/>
<path d="M529,0 l0,3 q6,3 12,0 l0,-3" fill="#fff" stroke="#2020e0" stroke-width="1"/>
<rect x="534.5" y="0" width="1" height="5" fill="#e01010"/>
<rect x="554" y="0" width="24" height="6.5" fill="#c6c6c6"/>
<path d="M562,0 l0,4 l8,0 l0,-4" fill="#fff" stroke="#2020e0" stroke-width="1"/>
<rect x="565.5" y="0" width="1" height="5" fill="#e01010"/>
<rect x="585" y="0" width="24" height="6.5" fill="#c6c6c6"/>
<path d="M590,0 l0,3 l14,0 l0,-3" fill="#e8e8ff" stroke="#2020e0" stroke-width="1"/>
<rect x="596.5" y="0" width="1" height="5" fill="#e01010"/>
<rect x="616" y="0" width="24" height="6.5" fill="#c6c6c6"/>
<path d="M625,0 l0,5 l6,0 l0,-5" fill="#fff" stroke="#2020e0" stroke-width="1"/>
<rect x="627.5" y="0" width="1" height="5" fill="#e01010"/>
<rect x="647" y="0" width="24" height="6.5" fill="#c6c6c6"/>
<path d="M653,0 l0,3 q6,3 12,0 l0,-3" fill="#fff" stroke="#2020e0" stroke-width="1"/>
<rect x="658.5" y="0" width="1" height="5" fill="#e01010"/>
<rect x="678" y="0" width="24" height="6.5" fill="#c6c6c6"/>
<path d="M686,0 l0,4 l8,0 l0,-4" fill="#fff" stroke="#2020e0" stroke-width="1"/>
<rect x="689.5" y="0" width="1" height="5" fill="#e01010"/>
<rect x="709" y="0" width="24" height="6.5" fill="#c6c6c6"/>
<path d="M714,0 l0,3 l14,0 l0,-3" fill="#e8e8ff" stroke="#2020e0" stroke-width="1"/>
<rect x="720.5" y="0" width="1" height="5" fill="#e01010"/>
<rect x="740" y="0" width="24" height="6.5" fill="#c6c6c6"/>
<path d="M749,0 l0,5 l6,0 l0,-5" fill="#fff" stroke="#2020e0" stroke-width="1"/>
<rect x="751.5" y="0" width="1" height="5" fill="#e01010"/>
<rect x="771" y="0" width="24" height="6.5" fill="#c6c6c6"/>
<path d="M777,0 l0,3 q6,3 12,0 l0,-3" fill="#fff" stroke="#2020e0" stroke-width="1"/>
<rect x="782.5" y="0" width="1" height="5" fill="#e01010"/>
<rect x="802" y="0" width="24" height="6.5" fill="#c6c6c6"/>
<path d="M810,0 l0,4 l8,0 l0,-4" fill="#fff" stroke="#2020e0" stroke-width="1"/>
<rect x="813.5" y="0" width="1" height="5" fill="#e01010"/>
<rect x="833" y="0" width="24" height="6.5" fill="#c6c6c6"/>
<path d="M838,0 l0,3 l14,0 l0,-3" fill="#e8e8ff" stroke="#2020e0" stroke-width="1"/>
<rect x="844.5" y="0" width="1" height="5" fill="#e01010"/>
<rect x="864" y="0" width="24" height="6.5" fill="#c6c6c6"/>
<path d="M873,0 l0,5 l6,0 l0,-5" fill="#fff" stroke="#2020e0" stroke-width="1"/>
<rect x="875.5" y="0" width="1" height="5" fill="#e01010"/>
<rect x="895" y="0" width="24" height="6.5" fill="#c6c6c6"/>
<path d="M901,0 l0,3 q6,3 12,0 l0,-3" fill="#fff" stroke="#2020e0" stroke-width="1"/>
<rect x="906.5" y="0" width="1" height="5" fill="#e01010"/>
<rect x="926" y="0" width="24" height="6.5" fill="#c6c6c6"/>
<path d="M934,0 l0,4 l8,0 l0,-4" fill="#fff" stroke="#2020e0" stroke-width="1"/>
<rect x="937.5" y="0" width="1" height="5" fill="#e01010"/>
<rect x="957" y="0" width="24" height="6.5" fill="#c6c6c6"/>
<path d="M962,0 l0,3 l14,0 l0,-3" fill="#e8e8ff" stroke="#2020e0" stroke-width="1"/>
<rect x="968.5" y="0" width="1" height="5" fill="#e01010"/>
<rect x="988" y="0" width="24" height="6.5" fill="#c6c6c6"/>
<path d="M997,0 l0,5 l6,0 l0,-5" fill="#fff" stroke="#2020e0" stroke-width="1"/>
<rect x="999.5" y="0" width="1" height="5" fill="#e01010"/>
<path d="M282,0 l12,0 l0,2 l-12,0Z" fill="#d8a020"/><circle cx="281" cy="1" r="3" fill="#3060d0"/>
<rect x="400" y="0" width="22" height="3" fill="#2020e0"/><path d="M403,0 l6,3 l-8,0Z M413,0 l6,3 l-8,0Z" fill="#e01030"/>
<rect x="0" y="17.5" width="15" height="23" fill="#c6c6c6"/>
<rect x="23" y="17.5" width="24" height="23" fill="#c6c6c6"/>
<rect x="0.40000000000000036" y="20" width="5.6" height="18" rx="2.8" fill="#fff" stroke="#2828e0" stroke-width="1.1"/>
<rect x="2.7" y="19.5" width="1" height="19" fill="#e01010"/>
<rect x="31.7" y="20" width="5.6" height="18" rx="2.8" fill="#e85828" stroke="#2828e0" stroke-width="1.1"/>
<rect x="34.0" y="19.5" width="1" height="19" fill="#10d030"/>
<rect x="80.5" y="17.5" width="2.5" height="2.5" fill="#4860c8"/><rect x="87" y="17.5" width="2.5" height="2.5" fill="#4860c8"/>
<rect x="79" y="19.5" width="12" height="6" rx="1" fill="#6484e4" stroke="#2838a0" stroke-width="0.7"/>
<rect x="82" y="25.5" width="6" height="2" fill="#7a5cc8"/>
<path d="M82.5,27.5 l5,0 l-1.2,3.5 l-2.6,0Z" fill="#c840d8"/>
<rect x="83.5" y="21.5" width="3" height="1.5" fill="#c8d8ff"/>
<path d="M82.5,30.5 l4.5,7.5 l11,-13" fill="none" stroke="#10b020" stroke-width="3" stroke-linecap="round" stroke-linejoin="round"/>
<rect x="115.5" y="17" width="2.5" height="2.5" fill="#4860c8"/><rect x="122" y="17" width="2.5" height="2.5" fill="#4860c8"/>
<rect x="114" y="19" width="12" height="6" rx="1" fill="#6484e4" stroke="#2838a0" stroke-width="0.7"/>
<rect x="117" y="25" width="6" height="2" fill="#7a5cc8"/>
<path d="M117.5,27 l5,0 l-1.2,3.5 l-2.6,0Z" fill="#c840d8"/>
<rect x="118.5" y="21" width="3" height="1.5" fill="#c8d8ff"/>
<rect x="117" y="23" width="13" height="16" fill="#e8ecff" stroke="#6878c8" stroke-width="1"/>
<rect x="120" y="27" width="8" height="1" fill="#6878c8"/>
<rect x="120" y="31" width="8" height="1" fill="#6878c8"/>
<rect x="120" y="35" width="8" height="1" fill="#6878c8"/>
<path d="M109.5,24 l0,14 M109.5,28 l4,0 M109.5,33.5 l4,0" stroke="#3040c0" stroke-width="1" fill="none"/>
<rect x="112.5" y="24.5" width="4.5" height="4.5" fill="#f0e040" stroke="#3040c0" stroke-width="0.8"/>
<rect x="112.5" y="30.5" width="4.5" height="4.5" fill="#f0e040" stroke="#3040c0" stroke-width="0.8"/>
<rect x="107.5" y="22" width="4" height="4" fill="#f0e040" stroke="#3040c0" stroke-width="0.8"/>
<rect x="140" y="18.5" width="20" height="14" fill="#fff" stroke="#222" stroke-width="0.8"/>
<rect x="140" y="22" width="20" height="0.9" fill="#222"/>
<rect x="140" y="25.5" width="20" height="0.9" fill="#222"/>
<rect x="140" y="29" width="20" height="0.9" fill="#222"/>
<rect x="146.5" y="18.5" width="0.9" height="14" fill="#222"/>
<rect x="153.5" y="18.5" width="0.9" height="14" fill="#222"/>
<rect x="140" y="30" width="14" height="3" fill="#f0e020" stroke="#222" stroke-width="0.6"/>
<rect x="149.5" y="24.5" width="2.5" height="2.5" fill="#4860c8"/><rect x="156" y="24.5" width="2.5" height="2.5" fill="#4860c8"/>
<rect x="148" y="26.5" width="12" height="6" rx="1" fill="#6484e4" stroke="#2838a0" stroke-width="0.7"/>
<rect x="151" y="32.5" width="6" height="2" fill="#7a5cc8"/>
<path d="M151.5,34.5 l5,0 l-1.2,3.5 l-2.6,0Z" fill="#c840d8"/>
<rect x="152.5" y="28.5" width="3" height="1.5" fill="#c8d8ff"/>
<path d="M173,22 l0,9 l10,6 l0,-9Z M173,22 l11,6 l6,-5" fill="#d8f0e0" stroke="#222" stroke-width="1.2" stroke-linejoin="round"/>
<path d="M172.5,28 l0,-11" stroke="#1020e0" stroke-width="1.3"/><path d="M170.5,18 l2,-3.5 l2,3.5Z" fill="#1020e0"/>
<path d="M183,28 l7,-4" stroke="#109020" stroke-width="1.3"/><path d="M189,22 l3.5,0.6 l-2.2,2.8Z" fill="#109020"/>
<path d="M183,33 l5,2.5" stroke="#d01010" stroke-width="1.3"/><path d="M187.2,33.8 l3.8,2.8 l-4.6,0.2Z" fill="#d01010"/>
<path d="M223.5,18 l6,0 l3,3 l0,9 l-9,0Z" fill="#f4f6ff" stroke="#7080c0" stroke-width="0.9"/>
<rect x="225" y="23" width="6" height="0.8" fill="#7080c0"/>
<rect x="225" y="25.5" width="6" height="0.8" fill="#7080c0"/>
<rect x="225" y="28" width="6" height="0.8" fill="#7080c0"/>
<path d="M239,31 l0,8 M239,35 l3,0 M239,39 l3,0" stroke="#3040c0" stroke-width="0.9" fill="none"/>
<rect x="237" y="28.5" width="4" height="4" fill="#f0e040" stroke="#3040c0" stroke-width="0.8"/><rect x="241" y="33" width="3.6" height="3.6" fill="#f0e040" stroke="#3040c0" stroke-width="0.8"/><rect x="241" y="37" width="3.6" height="3" fill="#f0e040" stroke="#3040c0" stroke-width="0.8"/>
<path d="M255,33 l6,-6 q3,-4 7,-4 l7,2 l0,8 l-9,6 l-11,-2Z" fill="#f8c830" stroke="#c88a10" stroke-width="0.8"/>
<path d="M255,33 l11,2 l9,-6 M266,35 l0,4" fill="none" stroke="#c88a10" stroke-width="0.8"/><path d="M258,31 q4,-6 10,-5 l6,1.5 l-8,5Z" fill="#fce88a"/>
<path d="M255.5,23 l3,4 l6,-8" fill="none" stroke="#10a020" stroke-width="2.4" stroke-linecap="round" stroke-linejoin="round"/>
<rect x="286.5" y="19.5" width="20" height="20" fill="#e8e8e8" stroke="#555" stroke-width="0.9"/>
<path d="M296.5,17.5 l0,24 M284.5,29.5 l24,0" stroke="#444" stroke-width="0.9"/>
<path d="M289,21.5 l5,0 l0,2.5 l-2.5,0 l0,3 l-2.5,0Z" fill="none" stroke="#a010a0" stroke-width="1.1"/><circle cx="301.5" cy="24" r="3" fill="none" stroke="#2030d0" stroke-width="1.1"/><path d="M289,32 l0,5.5 l5,0 q0,-5 -5,-5.500Z" fill="none" stroke="#2070d0" stroke-width="1.1"/><path d="M299,37.5 l5.5,0 l0,-5.500Z" fill="none" stroke="#d02030" stroke-width="1.1"/><circle cx="296.5" cy="29.5" r="1.8" fill="#e0b020"/>
<path d="M318.5,33 l0,-13" stroke="#1020e0" stroke-width="1.3"/><path d="M316.3,21 l2.2,-3.8 l2.2,3.800Z" fill="#1020e0"/>
<path d="M318.5,33 l12,-5" stroke="#10a020" stroke-width="1.3"/><path d="M329,25.5 l4,0.6 l-2.6,3Z" fill="#10a020"/>
<path d="M318.5,33 l11,4.5" stroke="#d01010" stroke-width="1.3"/><path d="M328.2,34.8 l4,3.4 l-5,0Z" fill="#d01010"/><circle cx="318.5" cy="33" r="1.4" fill="#d01010"/>
<text x="321.5" y="23.5" font-size="7" font-weight="bold" fill="#111">Z</text><text x="333" y="29.5" font-size="7" font-weight="bold" fill="#111">Y</text><text x="332.5" y="41" font-size="7" font-weight="bold" fill="#111">X</text>
<path d="M347.5,24.5 l5,-5 l16,0 l0,15 l-5,5 l-16,0Z M347.5,24.5 l16,0 l5,-5 M363.5,24.5 l0,15" fill="#f4f4f4" stroke="#444" stroke-width="0.8"/>
<path d="M347.5,30.5 l3,-3 l9,0 l0,9 l-3,3 l-9,0Z" fill="#f8d030" stroke="#c08a10" stroke-width="0.7"/><path d="M347.5,30.5 l9,0 l3,-3 M356.5,30.5 l0,9" fill="none" stroke="#c08a10" stroke-width="0.7"/><path d="M357,27 l4,-4" stroke="#e04010" stroke-width="1.6"/>
<path d="M378.5,26 l11,-5 l11,5 l-11,5Z M378.5,26 l0,6 l11,5 l11,-5 l0,-6 M389.5,31 l0,6 M383.5,26.5 l6,-2.5 l6,2.5 l-6,2.500Z" fill="none" stroke="#555" stroke-width="0.9"/>
<path d="M379,22.5 l10.5,-4.5 l10.5,4.5" fill="none" stroke="#e02020" stroke-width="0.8" stroke-dasharray="1.5,1"/><path d="M384.5,34 l0,6 l5,-3Z" fill="none" stroke="#e02020" stroke-width="0.8"/>
<path d="M410.5,20 l8,0 l0,8 l-4,0 l0,10 l-4,0Z M421,38 l0,-8 l4,0 l0,-10 l5,0 l0,18Z" fill="#f6f6f6" stroke="#333" stroke-width="1"/>
<rect x="436.5" y="14.5" width="30" height="29" rx="3" fill="#fafafa" stroke="#444" stroke-width="1"/>
<path d="M444,39 l15,-19" stroke="#3050d0" stroke-width="3.6" stroke-linecap="round"/><path d="M455.5,24 l5,-6" stroke="#b0b4c0" stroke-width="2" stroke-linecap="round"/>
<path d="M447.5,23 l13,16" stroke="#e8a020" stroke-width="3" stroke-linecap="round"/><path d="M441.5,22.5 l7,-4.5 l5,1 l-2,3 l-3,-0.5 l-4,3.500Z" fill="#8a8e98" stroke="#444" stroke-width="0.6"/>
<path d="M472,23 l10,-4.5 l11,3 l0,4 l-10,5 l-11,-3.500Z" fill="#f8cc30" stroke="#b88010" stroke-width="0.8"/><path d="M472,34 l10,-4 l11,3 l0,4 l-10,4.5 l-11,-3.500Z" fill="#f8cc30" stroke="#b88010" stroke-width="0.8"/><path d="M479,29 l0,3 M486,30 l0,3" stroke="#b88010" stroke-width="3"/>
<path d="M476,23.5 l7,-2.5 l6,1.5 l-7,3Z" fill="#fff0a0"/><circle cx="481" cy="22.5" r="1" fill="#e02020"/><circle cx="485" cy="23.5" r="1" fill="#e02020"/><ellipse cx="481" cy="33" rx="3" ry="1.3" fill="#fff0a0" stroke="#b88010" stroke-width="0.5"/>
<rect x="502" y="18.5" width="22" height="21" fill="#f4f4f4" stroke="#444" stroke-width="0.9"/>
<rect x="502" y="21.5" width="22" height="0.9" fill="#444"/>
<rect x="502" y="24.5" width="22" height="0.9" fill="#444"/>
<rect x="502" y="27.5" width="22" height="0.9" fill="#444"/>
<rect x="502" y="37" width="22" height="0.9" fill="#444"/>
<rect x="506" y="29.5" width="14" height="6" fill="#e0e4ff" stroke="#5060d0" stroke-width="0.9"/><rect x="508" y="31.5" width="10" height="2" fill="#fff" stroke="#5060d0" stroke-width="0.6"/>
<rect x="534.5" y="19" width="5.5" height="17" rx="2" fill="#78a8f0" stroke="#3858c0" stroke-width="0.8"/><rect x="532.5" y="33.5" width="9.5" height="5" rx="1.5" fill="#6090e0" stroke="#3858c0" stroke-width="0.8"/>
<path d="M545,21 l9,-1.5 l2,2 l0,15 l-2,2 l-9,-1.5 l0,-4 l4,0 l0,-8 l-4,0Z" fill="#f8cc30" stroke="#b88010" stroke-width="0.8"/><circle cx="551" cy="24.5" r="1.2" fill="#503010"/><circle cx="551" cy="35" r="1.2" fill="#503010"/>
<path d="M565,21.5 q0,-3 3,-3 l14,0 q3,0 3,3 l0,2 l-2.5,0 l0,-1.5 l-15,0 l0,1.5 l-2.5,0Z" fill="#f8a0a8" stroke="#d02030" stroke-width="0.8"/>
<path d="M563.5,34 l4,-6 l5,0 l0,6Z M577.5,34 l0,-6 l5,0 l4,6Z" fill="#dfe6ff" stroke="#3040b0" stroke-width="0.7"/><path d="M565,34 l3,-4 M568,34 l3,-4 M579,34 l3,-4 M582,34 l2.5,-3" stroke="#3040b0" stroke-width="0.8"/>
<rect x="573.5" y="21.5" width="2.8" height="18" fill="#4050a0"/><rect x="562.5" y="34" width="25" height="1" fill="#333"/>
<path d="M596,28 l6,-6 l8,0 l0,4 l3,0 l0,5 l-3,0 l0,5 l-14,0Z" fill="#10a090" stroke="#087060" stroke-width="0.8"/><path d="M596,39.5 l10,0" stroke="#f08020" stroke-width="1.5"/><path d="M595,39.5 l3,-2 l0,4Z M607,39.5 l-3,-2 l0,4Z" fill="#f08020"/>
<rect x="613.5" y="18" width="4" height="22" fill="#eef0ff" stroke="#333" stroke-width="0.8"/><path d="M613.5,22 l4,3 M613.5,27 l4,3 M613.5,32 l4,3 M613.5,36.5 l4,3" stroke="#3040b0" stroke-width="0.9"/>
<path d="M626,28 l8,0 l0,8 l-8,0Z M640,28 l8,0 l0,8 l-8,0Z" fill="#e8ecff" stroke="#3040b0" stroke-width="0.6"/><path d="M626,34 l6,-6 M628,36 l6,-6 M640,34 l6,-6 M642,36 l6,-6 M626,31 l3,-3 M645,36 l3,-3" stroke="#3040b0" stroke-width="0.8"/>
<path d="M630,37 l3,-4 l2,-12 l5,0 l1,12 l4,4Z" fill="#f8d020" stroke="#b08010" stroke-width="0.7"/><path d="M634,33 l5,-6 M635,27 l4,-5 M636,36.5 l5,-6" stroke="#d08010" stroke-width="0.8"/>
<rect x="657" y="18.5" width="22" height="21" fill="#111"/><path d="M662,18.5 l17,0 l0,4 l-17,0Z M662,35.5 l17,0 l0,4 l-17,0Z" fill="#e8e8e8"/><path d="M662,22 l4,-3.5 M667,22 l4,-3.5 M672,22 l4,-3.5 M662,39 l4,-3.5 M667,39 l4,-3.5 M672,39 l4,-3.5" stroke="#444" stroke-width="0.8"/>
<rect x="664" y="26" width="7" height="5.5" fill="#f4f4f4"/><circle cx="666.5" cy="28.5" r="6" fill="none" stroke="#e01020" stroke-width="1.2"/>
<rect x="691" y="20" width="3.5" height="17" rx="1.5" fill="#f8f0a0" stroke="#a09020" stroke-width="0.7"/><rect x="703.5" y="20" width="3.5" height="17" rx="1.5" fill="#f8f0a0" stroke="#a09020" stroke-width="0.7"/><rect x="696" y="22" width="6" height="13" fill="#fafafa" stroke="#555" stroke-width="0.8"/><path d="M694.5,24 l9,0 M694.5,33 l9,0" stroke="#555" stroke-width="0.8"/>
<path d="M720.5,20 l15,0 l0,6.5 l-13,0 l0,6.5 l15,0" fill="none" stroke="#1878b0" stroke-width="1.6"/><rect x="719" y="18.5" width="3" height="3" fill="#1020a0"/><rect x="736.5" y="32.5" width="3.5" height="4" fill="#1020a0"/>
<path d="M726,24 l11,14" stroke="#e8a020" stroke-width="2.8" stroke-linecap="round"/><path d="M720,25 l6,-4 l5,1 l-2,2.5 l-3,-0.5 l-3,3Z" fill="#8a8e98" stroke="#444" stroke-width="0.5"/>
<path d="M753.5,38.5 l4,-4 l1,-10 l6,0 l1,10 l4,4Z" fill="#d8e030" stroke="#708010" stroke-width="0.7"/><path d="M757,37 l8,-8 M758.5,31 l5,-5 M760,38 l7,-6" stroke="#608010" stroke-width="0.9"/><rect x="758" y="19.5" width="7" height="5" fill="#f4f4f4" stroke="#666" stroke-width="0.7"/><path d="M752,26 q5,-3 10,0 q4,2 8,-1" fill="none" stroke="#d01020" stroke-width="1"/>
<path d="M793,28 l22,0 l0,12 l-22,0Z" fill="#e4e8e4"/><path d="M793,36 l8,-8 M793,40 l12,-12 M797,40 l12,-12 M802,40 l12,-12 M807,40 l8,-8" stroke="#a8b0a8" stroke-width="0.8"/>
<path d="M798,22 l12,0 l0,5 l-3,0 l0,8 l-6,0 l0,-8 l-3,0Z" fill="#fafafa" stroke="#d02030" stroke-width="0.9"/><path d="M804,24 l0,-6" stroke="#e06010" stroke-width="1.4"/><path d="M801.8,19.5 l2.2,-3 l2.2,3Z" fill="#e06010"/>
<rect x="824.5" y="19.5" width="20" height="18" fill="#fafafa" stroke="#222" stroke-width="0.9"/>
<rect x="824.5" y="23" width="20" height="0.9" fill="#222"/>
<rect x="824.5" y="26.5" width="20" height="0.9" fill="#222"/>
<rect x="824.5" y="30" width="20" height="0.9" fill="#222"/>
<rect x="833" y="19.5" width="0.9" height="18" fill="#222"/>
<rect x="839" y="19.5" width="0.9" height="18" fill="#222"/>
<rect x="824.5" y="33.5" width="20" height="3" fill="#f0e020" stroke="#222" stroke-width="0.6"/>
<rect x="855.5" y="19.5" width="21" height="20" fill="#dfe8ff" stroke="#7088d0" stroke-width="0.9"/><rect x="859" y="21" width="14" height="11" fill="#f4f4f4" stroke="#555" stroke-width="0.8"/><rect x="859" y="23" width="14" height="0.8" fill="#555"/><rect x="862" y="26" width="8" height="4" fill="#e4e4e4" stroke="#666" stroke-width="0.6"/><rect x="868.5" y="34" width="8" height="5.5" fill="#eef2ff" stroke="#90a0d0" stroke-width="0.6"/>
<path d="M899,29.5 q9,-9 19,0 q-9,7 -19,0Z" fill="#f4f4f4" stroke="#222" stroke-width="1"/><circle cx="909" cy="28.5" r="3.8" fill="#4a8a20"/><circle cx="909" cy="28.5" r="1.6" fill="#111"/><path d="M900,26 l-2,-3 M903,24 l-1.5,-3 M906.5,22.8 l-0.5,-3 M910.5,22.8 l0.5,-3 M914,24 l1.5,-3 M917,26 l2,-2.5" stroke="#222" stroke-width="0.9"/>
<path d="M932.5,22 l0,14 q8,5 16,0 l0,-14" fill="#f6f0f0" stroke="#d03030" stroke-width="1"/><ellipse cx="940.5" cy="22" rx="8" ry="3" fill="#f8e8a0" stroke="#d03030" stroke-width="1"/><path d="M936.5,31 a4.5,4.5 0 0 1 8,-2.5 M944.5,32 a4.5,4.5 0 0 1 -8,2" fill="none" stroke="#2050d0" stroke-width="1.5"/><path d="M945.5,26 l0,3.5 l-3.5,0Z M935.5,37 l0,-3.5 l3.5,0Z" fill="#2050d0"/>
<path d="M966,18.5 l11,0 l5,5 l0,15 l-16,0Z" fill="#f8f8ff" stroke="#8090d0" stroke-width="0.9"/>
<rect x="970" y="25.5" width="10" height="1" fill="#e02030"/>
<rect x="970" y="28" width="10" height="1" fill="#e02030"/>
<rect x="970" y="30.5" width="10" height="1" fill="#e02030"/>
<rect x="970" y="33" width="10" height="1" fill="#e02030"/>
<rect x="970" y="35.5" width="10" height="1" fill="#e02030"/>
<rect x="962" y="20.5" width="5.5" height="16" rx="2" fill="#78a8f0" stroke="#3858c0" stroke-width="0.8"/><rect x="960.5" y="34.5" width="9" height="5" rx="1.5" fill="#6090e0" stroke="#3858c0" stroke-width="0.8"/><path d="M33.0,54.3 l5.0,-2.8 l5.0,2.8 l-5.0,2.8 Z" fill="#fff2a0" stroke="#c08a10" stroke-width="0.6"/>
<path d="M33.0,54.3 l5.0,2.8 l0,5.0 l-5.0,-2.8 Z" fill="#f8c020" stroke="#c08a10" stroke-width="0.6"/>
<path d="M43.0,54.3 l-5.0,2.8 l0,5.0 l5.0,-2.8 Z" fill="#fcd850" stroke="#c08a10" stroke-width="0.6"/>
<path d="M28.5,63.8 l5.0,-2.8 l5.0,2.8 l-5.0,2.8 Z" fill="#fff2a0" stroke="#c08a10" stroke-width="0.6"/>
<path d="M28.5,63.8 l5.0,2.8 l0,5.0 l-5.0,-2.8 Z" fill="#f8c020" stroke="#c08a10" stroke-width="0.6"/>
<path d="M38.5,63.8 l-5.0,2.8 l0,5.0 l5.0,-2.8 Z" fill="#fcd850" stroke="#c08a10" stroke-width="0.6"/>
<path d="M39.0,65.8 l5.0,-2.8 l5.0,2.8 l-5.0,2.8 Z" fill="#fff2a0" stroke="#c08a10" stroke-width="0.6"/>
<path d="M39.0,65.8 l5.0,2.8 l0,5.0 l-5.0,-2.8 Z" fill="#f8c020" stroke="#c08a10" stroke-width="0.6"/>
<path d="M49.0,65.8 l-5.0,2.8 l0,5.0 l5.0,-2.8 Z" fill="#fcd850" stroke="#c08a10" stroke-width="0.6"/>
<path d="M44,51.5 l1,5 l4,-3 l-2.5,4 l4.5,1 l-4.5,1 l2,3.5 l-4,-2 l-0.5,4 l-1.5,-4 l-3.5,2 l2,-3.5 l-4,-1 l4,-1 l-2,-4 l3.5,2.500Z" fill="#fff" stroke="#40a0e0" stroke-width="0.6"/><circle cx="44.5" cy="58" r="2" fill="#f8e020"/>
<path d="M65.0,54.3 l5.0,-2.8 l5.0,2.8 l-5.0,2.8 Z" fill="#b8b4a4" stroke="#8a8676" stroke-width="0.6"/>
<path d="M65.0,54.3 l5.0,2.8 l0,5.0 l-5.0,-2.8 Z" fill="#a09c8c" stroke="#8a8676" stroke-width="0.6"/>
<path d="M75.0,54.3 l-5.0,2.8 l0,5.0 l5.0,-2.8 Z" fill="#aca898" stroke="#8a8676" stroke-width="0.6"/>
<path d="M70.0,65.3 l5.0,-2.8 l5.0,2.8 l-5.0,2.8 Z" fill="#b8b4a4" stroke="#8a8676" stroke-width="0.6"/>
<path d="M70.0,65.3 l5.0,2.8 l0,5.0 l-5.0,-2.8 Z" fill="#a09c8c" stroke="#8a8676" stroke-width="0.6"/>
<path d="M80.0,65.3 l-5.0,2.8 l0,5.0 l5.0,-2.8 Z" fill="#aca898" stroke="#8a8676" stroke-width="0.6"/>
<path d="M62,70 l8,-7 l3,2.5 l-7,7.500Z" fill="#a09c8c" stroke="#8a8676" stroke-width="0.6"/><circle cx="70" cy="63.5" r="3" fill="#aca898"/>
<path d="M91.0,56.3 l5.0,-2.8 l5.0,2.8 l-5.0,2.8 Z" fill="#b8b4a4" stroke="#8a8676" stroke-width="0.6"/>
<path d="M91.0,56.3 l5.0,2.8 l0,5.0 l-5.0,-2.8 Z" fill="#a09c8c" stroke="#8a8676" stroke-width="0.6"/>
<path d="M101.0,56.3 l-5.0,2.8 l0,5.0 l5.0,-2.8 Z" fill="#aca898" stroke="#8a8676" stroke-width="0.6"/>
<path d="M91.0,66.3 l5.0,-2.8 l5.0,2.8 l-5.0,2.8 Z" fill="#b8b4a4" stroke="#8a8676" stroke-width="0.6"/>
<path d="M91.0,66.3 l5.0,2.8 l0,5.0 l-5.0,-2.8 Z" fill="#a09c8c" stroke="#8a8676" stroke-width="0.6"/>
<path d="M101.0,66.3 l-5.0,2.8 l0,5.0 l5.0,-2.8 Z" fill="#aca898" stroke="#8a8676" stroke-width="0.6"/>
<path d="M101.5,66.3 l5.0,-2.8 l5.0,2.8 l-5.0,2.8 Z" fill="#b8b4a4" stroke="#8a8676" stroke-width="0.6"/>
<path d="M101.5,66.3 l5.0,2.8 l0,5.0 l-5.0,-2.8 Z" fill="#a09c8c" stroke="#8a8676" stroke-width="0.6"/>
<path d="M111.5,66.3 l-5.0,2.8 l0,5.0 l5.0,-2.8 Z" fill="#aca898" stroke="#8a8676" stroke-width="0.6"/>
<path d="M111,51.5 l-8,8 l3,0 l-5,6 l9,-8 l-3,0Z" fill="#a8a494" stroke="#8a8676" stroke-width="0.5"/>
<path d="M125.0,57.3 l5.0,-2.8 l5.0,2.8 l-5.0,2.8 Z" fill="#b8b4a4" stroke="#8a8676" stroke-width="0.6"/>
<path d="M125.0,57.3 l5.0,2.8 l0,5.0 l-5.0,-2.8 Z" fill="#a09c8c" stroke="#8a8676" stroke-width="0.6"/>
<path d="M135.0,57.3 l-5.0,2.8 l0,5.0 l5.0,-2.8 Z" fill="#aca898" stroke="#8a8676" stroke-width="0.6"/>
<path d="M123.0,66.3 l5.0,-2.8 l5.0,2.8 l-5.0,2.8 Z" fill="#b8b4a4" stroke="#8a8676" stroke-width="0.6"/>
<path d="M123.0,66.3 l5.0,2.8 l0,5.0 l-5.0,-2.8 Z" fill="#a09c8c" stroke="#8a8676" stroke-width="0.6"/>
<path d="M133.0,66.3 l-5.0,2.8 l0,5.0 l5.0,-2.8 Z" fill="#aca898" stroke="#8a8676" stroke-width="0.6"/>
<path d="M130.0,67.3 l5.0,-2.8 l5.0,2.8 l-5.0,2.8 Z" fill="#b8b4a4" stroke="#8a8676" stroke-width="0.6"/>
<path d="M130.0,67.3 l5.0,2.8 l0,5.0 l-5.0,-2.8 Z" fill="#a09c8c" stroke="#8a8676" stroke-width="0.6"/>
<path d="M140.0,67.3 l-5.0,2.8 l0,5.0 l5.0,-2.8 Z" fill="#aca898" stroke="#8a8676" stroke-width="0.6"/>
<path d="M129.5,51 l0,4 M127.5,54 l2,2.5 l2,-2.500Z" stroke="#b08880" stroke-width="1" fill="#b08880"/>
<path d="M155.0,55.3 l5.0,-2.8 l5.0,2.8 l-5.0,2.8 Z" fill="#fff2a0" stroke="#c08a10" stroke-width="0.6"/>
<path d="M155.0,55.3 l5.0,2.8 l0,5.0 l-5.0,-2.8 Z" fill="#f8c020" stroke="#c08a10" stroke-width="0.6"/>
<path d="M165.0,55.3 l-5.0,2.8 l0,5.0 l5.0,-2.8 Z" fill="#fcd850" stroke="#c08a10" stroke-width="0.6"/>
<path d="M154.0,64.8 l5.0,-2.8 l5.0,2.8 l-5.0,2.8 Z" fill="#fff2a0" stroke="#c08a10" stroke-width="0.6"/>
<path d="M154.0,64.8 l5.0,2.8 l0,5.0 l-5.0,-2.8 Z" fill="#f8c020" stroke="#c08a10" stroke-width="0.6"/>
<path d="M164.0,64.8 l-5.0,2.8 l0,5.0 l5.0,-2.8 Z" fill="#fcd850" stroke="#c08a10" stroke-width="0.6"/>
<path d="M164.5,65.8 l5.0,-2.8 l5.0,2.8 l-5.0,2.8 Z" fill="#fff2a0" stroke="#c08a10" stroke-width="0.6"/>
<path d="M164.5,65.8 l5.0,2.8 l0,5.0 l-5.0,-2.8 Z" fill="#f8c020" stroke="#c08a10" stroke-width="0.6"/>
<path d="M174.5,65.8 l-5.0,2.8 l0,5.0 l5.0,-2.8 Z" fill="#fcd850" stroke="#c08a10" stroke-width="0.6"/>
<path d="M160,54.5 l13,11 M172.5,54 l-10,13" stroke="#222" stroke-width="1.8" stroke-linecap="round"/>
<rect x="188.5" y="54.5" width="105" height="17" rx="3" fill="#d0d0d0" stroke="#f2f2f2" stroke-width="1.2"/><rect x="189.5" y="55.5" width="103" height="15" rx="2.5" fill="none" stroke="#b0b0b0" stroke-width="0.8"/>
<rect x="276.5" y="56.5" width="15" height="13" rx="1.5" fill="#d8d8d8" stroke="#bcbcbc" stroke-width="0.8"/><path d="M279.5,60 l9,0 l-4.5,6Z" fill="#9a9a9a" stroke="#eee" stroke-width="0.6"/>
<path d="M307,57.5 l0,9 l6,-4.500Z" fill="#e02020"/>
<path d="M312.5,58.5 l8.0,-4.5 l8.0,4.5 l-8.0,4.5 Z" fill="#e8ecec" stroke="#7a8080" stroke-width="0.6"/>
<path d="M312.5,58.5 l8.0,4.5 l0,8.0 l-8.0,-4.5 Z" fill="#c4caca" stroke="#7a8080" stroke-width="0.6"/>
<path d="M328.5,58.5 l-8.0,4.5 l0,8.0 l8.0,-4.5 Z" fill="#d4dada" stroke="#7a8080" stroke-width="0.6"/>
<path d="M338.5,57.5 l0,9 l6,-4.500Z" fill="#10b020"/>
<path d="M344.5,58.5 l8.0,-4.5 l8.0,4.5 l-8.0,4.5 Z" fill="#fff2a0" stroke="#c08a10" stroke-width="0.6"/>
<path d="M344.5,58.5 l8.0,4.5 l0,8.0 l-8.0,-4.5 Z" fill="#f8c020" stroke="#c08a10" stroke-width="0.6"/>
<path d="M360.5,58.5 l-8.0,4.5 l0,8.0 l8.0,-4.5 Z" fill="#fcd850" stroke="#c08a10" stroke-width="0.6"/>
<path d="M375,71 l8,-5 l0,-12 l7,2.5" fill="none" stroke="#222" stroke-width="1.5"/><circle cx="374.5" cy="71.5" r="2.3" fill="#2040d0"/><circle cx="390.5" cy="56.5" r="2.3" fill="#2040d0"/>
<rect x="439" y="51" width="24" height="24" fill="#c6c6c6"/>
<rect x="470" y="51" width="24" height="24" fill="#c6c6c6"/>
<rect x="501" y="51" width="24" height="24" fill="#c6c6c6"/>
<rect x="532" y="51" width="24" height="24" fill="#c6c6c6"/>
<rect x="563" y="51" width="24" height="24" fill="#c6c6c6"/>
<rect x="594" y="51" width="24" height="24" fill="#c6c6c6"/>
<rect x="625" y="51" width="24" height="24" fill="#c6c6c6"/>
<rect x="656" y="51" width="24" height="24" fill="#c6c6c6"/>
<rect x="687" y="51" width="24" height="24" fill="#c6c6c6"/>
<rect x="718" y="51" width="24" height="24" fill="#c6c6c6"/>
<rect x="749" y="51" width="24" height="24" fill="#c6c6c6"/>
<rect x="780" y="51" width="24" height="24" fill="#c6c6c6"/>
<rect x="811" y="51" width="24" height="24" fill="#c6c6c6"/>
<rect x="842" y="51" width="24" height="24" fill="#c6c6c6"/>
<rect x="873" y="51" width="24" height="24" fill="#c6c6c6"/>
<rect x="904" y="51" width="24" height="24" fill="#c6c6c6"/>
<rect x="935" y="51" width="24" height="24" fill="#c6c6c6"/>
<rect x="966" y="51" width="24" height="24" fill="#c6c6c6"/>
<rect x="997" y="51" width="24" height="24" fill="#c6c6c6"/>
<path d="M441.5,57 l5,-3 l14,0 l0,13 l-5,4 l-14,0Z" fill="#e8e8e8" stroke="#888" stroke-width="0.7"/>
<path d="M444.0,58.1 l6.5,-3.6 l6.5,3.6 l-6.5,3.6 Z" fill="#f06070" stroke="#900818" stroke-width="0.6"/>
<path d="M444.0,58.1 l6.5,3.6 l0,6.5 l-6.5,-3.6 Z" fill="#c01020" stroke="#900818" stroke-width="0.6"/>
<path d="M457.0,58.1 l-6.5,3.6 l0,6.5 l6.5,-3.6 Z" fill="#e02838" stroke="#900818" stroke-width="0.6"/>
<path d="M471.5,63 l10.5,-8 l10.5,8 l-10.5,8Z" fill="#fff" stroke="#2030e0" stroke-width="1.1"/><path d="M476,63 l6,-4.5 l6,4.5 l-6,4.500Z" fill="#10e020" stroke="#2030e0" stroke-width="0.9"/>
<path d="M504,59.5 l4,-4 l14,0 l0,12 l-4,4 l-14,0Z M504,59.5 l14,0 l4,-4 M518,59.5 l0,12" fill="#fff" stroke="#2030e0" stroke-width="1.1"/>
<path d="M535,62 l3,-3 l15,0 l0,7 l-3,3 l-15,0Z M535,62 l15,0 l3,-3 M550,62 l0,7" fill="#f0f0ff" stroke="#6070e0" stroke-width="0.9"/><path d="M537,56.5 l14,0" stroke="#e02020" stroke-width="1"/><path d="M536,56.5 l3,-2 l0,4Z M552,56.5 l-3,-2 l0,4Z" fill="#e02020"/><rect x="543.5" y="60" width="1.5" height="8" fill="#30b030"/>
<path d="M565.5,71.5 l0,-12 q0,-6 4.5,-6 q4,0 4,6 l2,0 q0,-6 4,-6 q4.5,0 4.5,6 l0,12Z" fill="#fff" stroke="#2030e0" stroke-width="1.1"/><path d="M566.5,59 q0,-5 3.5,-5 q3.5,0 3.5,5Z M576.5,59 q0,-5 3.5,-5 q3.5,0 3.5,5Z" fill="#e01020"/><rect x="574.5" y="53" width="1" height="19" fill="#e01020"/>
<rect x="597" y="54.5" width="6" height="4.5" fill="#e01010"/>
<rect x="603" y="54.5" width="6" height="4.5" fill="#f0f000"/>
<rect x="609" y="54.5" width="6" height="4.5" fill="#1010e0"/>
<rect x="597" y="59.0" width="6" height="4.5" fill="#10d010"/>
<rect x="603" y="59.0" width="6" height="4.5" fill="#10e0e0"/>
<rect x="609" y="59.0" width="6" height="4.5" fill="#f4f4f4"/>
<rect x="597" y="63.5" width="6" height="4.5" fill="#101010"/>
<rect x="603" y="63.5" width="6" height="4.5" fill="#f4f4f4"/>
<rect x="609" y="63.5" width="6" height="4.5" fill="#2080f0"/>
<rect x="597" y="68.0" width="6" height="4.5" fill="#f07010"/>
<rect x="603" y="68.0" width="6" height="4.5" fill="#108010"/>
<rect x="609" y="68.0" width="6" height="4.5" fill="#8010a0"/>
<path d="M628,56 q1.5,-2 4,-1 q5,2 10,0 q2.5,-1 4,1 q1,3.5 0,7 q1,3.5 0,7 q-1.5,2 -4,1 q-5,-2 -10,0 q-2.5,1 -4,-1 q-1,-3.5 0,-7 q-1,-3.5 0,-7Z" fill="#fff" stroke="#2030e0" stroke-width="1.1"/><path d="M627,63 l20,0 M637,54 l0,18" stroke="#e02020" stroke-width="0.9" stroke-dasharray="3,1.5"/>
<path d="M659.5,56.5 l17,13" stroke="#2030e0" stroke-width="1.3"/>
<circle cx="699" cy="63" r="8.5" fill="none" stroke="#2030e0" stroke-width="1.1"/><path d="M688,63 l22,0 M699,52 l0,22" stroke="#e02020" stroke-width="0.9" stroke-dasharray="3,1.5"/>
<path d="M719.5,55.5 l14,16 M728.5,54.5 l13,12" stroke="#2030e0" stroke-width="1.1"/><path d="M722.5,54.5 l16,14" stroke="#e02020" stroke-width="1.3"/>
<rect x="751.5" y="55.5" width="19" height="15" fill="#fff" stroke="#2030e0" stroke-width="1.1"/><path d="M750,63 l22,0 M761,53.5 l0,19" stroke="#e02020" stroke-width="0.9" stroke-dasharray="3,1.5"/>
<path d="M783.5,55.5 q8,-4 17,0 q-8,4 -17,0Z" fill="#b8e0c0" stroke="#80a888" stroke-width="0.6"/>
<rect x="782.5" y="59.5" width="19" height="2" fill="#e01020"/>
<rect x="782.5" y="61.5" width="19" height="2" fill="#f0a010"/>
<rect x="782.5" y="63.5" width="19" height="2" fill="#f0f020"/>
<rect x="782.5" y="65.5" width="19" height="2" fill="#10c020"/>
<rect x="782.5" y="67.5" width="19" height="2" fill="#2040e0"/>
<rect x="782.5" y="69.5" width="19" height="2" fill="#8020c0"/>
<rect x="782.5" y="71.5" width="19" height="2" fill="#f4f4f4"/>
<path d="M814,59.5 l4,-4 l14,0 l0,12 l-4,4 l-14,0Z M814,59.5 l14,0 l4,-4 M828,59.5 l0,12" fill="#fff" stroke="#2030e0" stroke-width="1.1"/><path d="M816.5,70 l0,-9 l10,9 l0,-9" fill="none" stroke="#e01020" stroke-width="1.3"/><path d="M816.5,61 l10,0 l-10,9Z" fill="#e01020" opacity="0.0"/>
<path d="M817,70.5 l9,-9" stroke="#e01020" stroke-width="2"/><rect x="816" y="60.5" width="1.5" height="10.5" fill="#e01020"/><rect x="825.5" y="60.5" width="1.5" height="10.5" fill="#e01020"/>
<path d="M847,53.5 l1.5,13 l9,6 M848.5,66.5 l11,-8" fill="none" stroke="#e01020" stroke-width="1.1"/>
<circle cx="847" cy="53.5" r="1.3" fill="#e01020"/>
<circle cx="848.5" cy="66.5" r="1.3" fill="#e01020"/>
<circle cx="857.5" cy="72.5" r="1.3" fill="#e01020"/>
<circle cx="859.5" cy="58.5" r="1.3" fill="#e01020"/>
<path d="M874.5,62 l11,-8 l10,12 l-11,8Z M895.5,66 l-3,2 l-11,-8" fill="#fff" stroke="#2030e0" stroke-width="1"/>
<path d="M881,54.5 l1,9.5 l8,7 M882,64 l10,-6" fill="none" stroke="#e020a0" stroke-width="1.1"/>
<circle cx="881" cy="54.5" r="1.3" fill="#e020a0"/>
<circle cx="882" cy="64" r="1.3" fill="#e020a0"/>
<circle cx="890" cy="71" r="1.3" fill="#e020a0"/>
<circle cx="892" cy="58" r="1.3" fill="#e020a0"/>
<path d="M906.5,59.5 l4,-4 l15,0 l0,12 l-4,4 l-15,0Z M906.5,59.5 l15,0 l4,-4 M921.5,59.5 l0,12" fill="#f4ffff" stroke="#10d0e0" stroke-width="1"/>
<path d="M912,54.5 l0,11 l8,5 M912,65.5 l10,-8" fill="none" stroke="#e01020" stroke-width="1.1"/>
<circle cx="912" cy="54.5" r="1.3" fill="#e01020"/>
<circle cx="912" cy="65.5" r="1.3" fill="#e01020"/>
<circle cx="920" cy="70.5" r="1.3" fill="#e01020"/>
<circle cx="922" cy="57.5" r="1.3" fill="#e01020"/>
<path d="M939.5,56 l15,14 M954.5,56 l-15,14" stroke="#e80c18" stroke-width="3.8"/>
<path d="M967.5,59 l5,0 l1.5,1.5 l5,0 l0,10 l-11.5,0Z" fill="#d89818" stroke="#a07010" stroke-width="0.6"/><path d="M967.5,70.5 l2.5,-7 l11,0 l-2,7Z" fill="#f8c030" stroke="#a07010" stroke-width="0.6"/>
<text x="980" y="68.5" font-size="11" fill="#333" font-family="Liberation Sans,Noto Sans CJK SC,sans-serif">组</text>
<path d="M1003,53 l1,8" stroke="#3050c0" stroke-width="2"/><path d="M1000.5,61 l5,0 l4,10 l-11,0Z" fill="#e8a820" stroke="#a07010" stroke-width="0.6"/>
<rect x="6.5" y="83.5" width="21.5" height="21" rx="2.5" fill="#fdfdfd" stroke="#555" stroke-width="1"/>
<path d="M9.5,87.5 l0,4.5 l3.5,-2.250Z" fill="#10a020"/><path d="M9.5,96 l0,4.5 l3.5,-2.250Z" fill="#e01010"/>
<path d="M20,86 l2,2 l-2,2 l-2,-2Z" fill="#fff" stroke="#222" stroke-width="0.7"/>
<path d="M15,90.5 l2,2 l-2,2 l-2,-2Z" fill="#fff" stroke="#222" stroke-width="0.7"/>
<path d="M25,90.5 l2,2 l-2,2 l-2,-2Z" fill="#fff" stroke="#222" stroke-width="0.7"/>
<path d="M20,97.5 l2,2 l-2,2 l-2,-2Z" fill="#fff" stroke="#222" stroke-width="0.7"/>
<path d="M15.5,94.5 l2,2 l-2,2 l-2,-2Z" fill="#fff" stroke="#222" stroke-width="0.7"/>
<path d="M24.5,94.5 l2,2 l-2,2 l-2,-2Z" fill="#fff" stroke="#222" stroke-width="0.7"/>
<circle cx="20" cy="94.5" r="1.8" fill="#f0c020"/>
<path d="M40,86.5 l2,2 l-2,2 l-2,-2Z" fill="#fff" stroke="#222" stroke-width="0.7"/>
<path d="M35,91.5 l2,2 l-2,2 l-2,-2Z" fill="#fff" stroke="#222" stroke-width="0.7"/>
<path d="M45,91.5 l2,2 l-2,2 l-2,-2Z" fill="#fff" stroke="#222" stroke-width="0.7"/>
<path d="M40,96.5 l2,2 l-2,2 l-2,-2Z" fill="#fff" stroke="#222" stroke-width="0.7"/>
<circle cx="40" cy="93.5" r="1.8" fill="#f0c020"/><path d="M38,100 q4,4 9,-1" fill="none" stroke="#2890b0" stroke-width="2.2"/><path d="M36,98 l1.5,5 l3.5,-3.500Z" fill="#2890b0"/>
<rect x="52.5" y="83.5" width="21.5" height="21" rx="2.5" fill="#fdfdfd" stroke="#555" stroke-width="1"/>
<path d="M57,100.5 l12,-12" stroke="#222" stroke-width="1.1"/>
<circle cx="69.5" cy="88" r="1.6" fill="#e01010"/>
<rect x="75.5" y="83.5" width="21.5" height="21" rx="2.5" fill="#fdfdfd" stroke="#555" stroke-width="1"/>
<path d="M80,100.5 l14,-14" stroke="#222" stroke-width="1.1"/>
<circle cx="86.5" cy="94" r="1.6" fill="#e01010"/>
<path d="M102.5,86.5 q5,0 5.5,6.5 q0.5,7 6.5,7" fill="none" stroke="#222" stroke-width="1.2"/>
<circle cx="108" cy="93.5" r="1.6" fill="#e01010"/>
<path d="M124.5,97.5 q7.5,-9 15,0 M132,86 l0,16" fill="none" stroke="#222" stroke-width="1.2"/>
<circle cx="132" cy="93.2" r="1.6" fill="#e01010"/>
<rect x="145" y="83.5" width="21.5" height="21" rx="2.5" fill="#fdfdfd" stroke="#555" stroke-width="1"/>
<circle cx="155.8" cy="94" r="6.8" fill="none" stroke="#222" stroke-width="1.1"/>
<circle cx="155.8" cy="94" r="1.6" fill="#e01010"/>
<circle cx="178.5" cy="94" r="6.5" fill="none" stroke="#222" stroke-width="1.1"/>
<circle cx="178.5" cy="87.5" r="1.6" fill="#e01010"/>
<circle cx="178.5" cy="100.5" r="1.6" fill="#e01010"/>
<circle cx="172" cy="94" r="1.6" fill="#e01010"/>
<circle cx="185" cy="94" r="1.6" fill="#e01010"/>
<rect x="190.5" y="83.5" width="21.5" height="21" rx="2.5" fill="#fdfdfd" stroke="#555" stroke-width="1"/>
<path d="M195,94.5 l13,0 M201.5,88 l0,13" stroke="#222" stroke-width="1.2"/>
<circle cx="201.5" cy="94.5" r="1.6" fill="#e01010"/>
<rect x="214" y="83.5" width="21.5" height="21" rx="2.5" fill="#fdfdfd" stroke="#555" stroke-width="1"/>
<path d="M218.5,100.5 l14,-14" stroke="#222" stroke-width="1.1"/>
<circle cx="221.5" cy="97.5" r="1.6" fill="#e01010"/>
<path d="M240,91 q5,-5 11,-2 q-3,5 -2,10 q-6,1 -9,-8Z" fill="#a8d0f8" stroke="#3878c8" stroke-width="0.8"/>
<circle cx="247.5" cy="91.5" r="1.6" fill="#e01010"/>
<path d="M271.5,88 l9,3 l0,9.5 l-9,-3Z M274.5,89 l0,9.5 M277.5,90 l0,9.5 M271.5,91.2 l9,3 M271.5,94.4 l9,3" fill="none" stroke="#222" stroke-width="0.9"/>
<circle cx="276" cy="93.8" r="1.3" fill="#e01010"/></g>

</svg>
</body></html>
